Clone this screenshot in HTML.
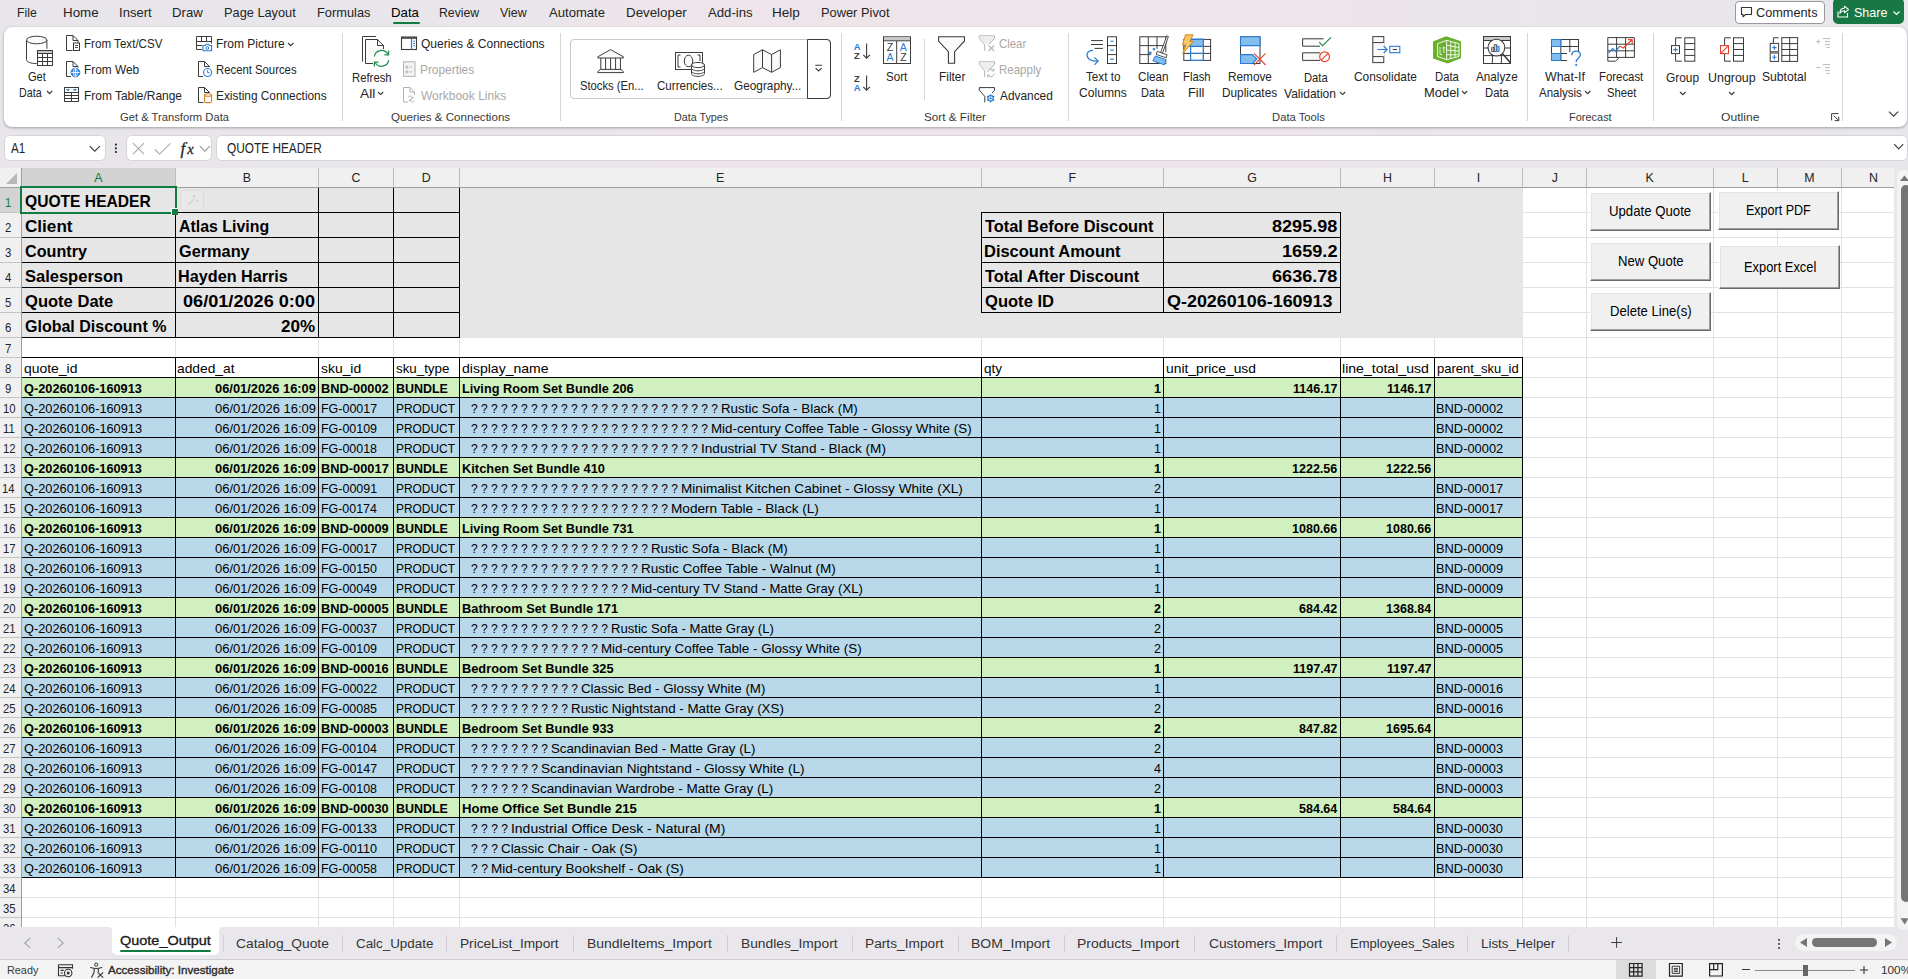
<!DOCTYPE html>
<html lang="en"><head><meta charset="utf-8"><title>Quote_Output - Excel</title>
<style>
html,body{margin:0;padding:0}
body{width:1908px;height:979px;overflow:hidden;position:relative;background:#e8e6eb;font-family:"Liberation Sans",Arial,sans-serif;color:#242424}
#app{position:absolute;left:0;top:0;width:1908px;height:979px;overflow:hidden}
#app div,#app svg,#app span.t{position:absolute}
span.t{white-space:pre;transform-origin:0 0;display:block}
span.sb{-webkit-text-stroke:0.35px currentColor}
</style></head>
<body><div id="app">
<div style="left:0px;top:0px;width:1908px;height:168px;background:linear-gradient(90deg,#e8e6eb 0%,#e9e6eb 22%,#eee5ea 40%,#eee5ea 62%,#eae6eb 80%,#e8e7ec 100%)"></div>
<span class="t" style="left:17.28px;top:4.85px;font-size:12.6px;font-weight:400;color:#242424;line-height:16px;transform:scaleX(0.9713);">File</span>
<span class="t" style="left:63.19px;top:4.85px;font-size:12.6px;font-weight:400;color:#242424;line-height:16px;transform:scaleX(1.0596);">Home</span>
<span class="t" style="left:119.11px;top:4.85px;font-size:12.6px;font-weight:400;color:#242424;line-height:16px;transform:scaleX(1.0362);">Insert</span>
<span class="t" style="left:172.21px;top:4.85px;font-size:12.6px;font-weight:400;color:#242424;line-height:16px;transform:scaleX(1.0442);">Draw</span>
<span class="t" style="left:224.24px;top:4.85px;font-size:12.6px;font-weight:400;color:#242424;line-height:16px;transform:scaleX(1.0146);">Page Layout</span>
<span class="t" style="left:317.23px;top:4.85px;font-size:12.6px;font-weight:400;color:#242424;line-height:16px;transform:scaleX(1.0179);">Formulas</span>
<span class="t" style="left:439.28px;top:4.85px;font-size:12.6px;font-weight:400;color:#242424;line-height:16px;transform:scaleX(0.9716);">Review</span>
<span class="t" style="left:500.25px;top:4.85px;font-size:12.6px;font-weight:400;color:#242424;line-height:16px;transform:scaleX(0.9842);">View</span>
<span class="t" style="left:549.00px;top:4.85px;font-size:12.6px;font-weight:400;color:#242424;line-height:16px;transform:scaleX(1.0394);">Automate</span>
<span class="t" style="left:625.94px;top:4.85px;font-size:12.6px;font-weight:400;color:#242424;line-height:16px;transform:scaleX(1.0585);">Developer</span>
<span class="t" style="left:708.25px;top:4.85px;font-size:12.6px;font-weight:400;color:#242424;line-height:16px;transform:scaleX(1.0460);">Add-ins</span>
<span class="t" style="left:772.17px;top:4.85px;font-size:12.6px;font-weight:400;color:#242424;line-height:16px;transform:scaleX(1.0759);">Help</span>
<span class="t" style="left:821.48px;top:4.85px;font-size:12.6px;font-weight:400;color:#242424;line-height:16px;transform:scaleX(1.0196);">Power Pivot</span>
<span class="t" style="left:391.45px;top:4.85px;font-size:12.6px;font-weight:400;color:#000;line-height:16px;transform:scaleX(1.0505);">Data</span>
<div style="left:392.5px;top:21.6px;width:27.5px;height:2.4px;background:#107c41;border-radius:1.2px"></div>
<div style="left:1735px;top:0.5px;width:90px;height:23.5px;background:#fff;border:1px solid #9a989c;border-radius:4px;box-sizing:border-box"></div>
<svg style="left:1740px;top:6px;" width="13" height="12" viewBox="0 0 13 12" fill="none"><path d="M1.5 1.5h10v7h-6l-2.5 2.3v-2.3h-1.5z" stroke="#333" stroke-width="1.1" stroke-linejoin="round"/></svg>
<span class="t" style="left:1756.14px;top:4.85px;font-size:12.6px;font-weight:400;color:#242424;line-height:16px;transform:scaleX(1.0102);">Comments</span>
<div style="left:1833px;top:-2px;width:71.3px;height:26px;background:#187844;border-radius:5px"></div>
<svg style="left:1836px;top:4px;" width="15" height="15" viewBox="0 0 15 15" fill="none"><path d="M2 7.5v5.5h9.5v-4" stroke="#fff" stroke-width="1.1"/><path d="M8.5 2.2l4 3.3-4 3.3v-2.1c-2.6 0-3.8 1-4.6 2.6 0-3 1.6-5 4.6-5.2z" stroke="#fff" stroke-width="1.05" stroke-linejoin="round"/></svg>
<span class="t" style="left:1853.50px;top:4.85px;font-size:12.6px;font-weight:400;color:#fff;line-height:16px;transform:scaleX(0.9969);">Share</span>
<svg style="left:1892px;top:10px;" width="9" height="6" viewBox="0 0 9 6" fill="none"><path d="M1.5 1.5l3 3 3-3" stroke="#fff" stroke-width="1.2"/></svg>
<div style="left:5px;top:135.6px;width:100.4px;height:24.7px;background:#fff;border-radius:4.5px;box-shadow:0 0 0 0.8px #d2d0d5"></div>
<span class="t" style="left:11.25px;top:138.60px;font-size:14.2px;font-weight:400;color:#242424;line-height:18px;transform:scaleX(0.8203);">A1</span>
<svg style="left:88px;top:144px;" width="14" height="10" viewBox="0 0 14 10" fill="none"><path d="M1.8 2.2l5 5 5-5" stroke="#3b3b3b" stroke-width="1.2"/></svg>
<svg style="left:114px;top:143px;" width="4" height="11" viewBox="0 0 4 11" fill="none"><circle cx="1.9" cy="1.6" r="1.1" fill="#222"/><circle cx="1.9" cy="5.3" r="1.1" fill="#222"/><circle cx="1.9" cy="9" r="1.1" fill="#222"/></svg>
<div style="left:127px;top:135.6px;width:84.2px;height:24.7px;background:#fff;border-radius:4.5px;box-shadow:0 0 0 0.8px #d2d0d5"></div>
<svg style="left:131px;top:141px;" width="16" height="15" viewBox="0 0 16 15" fill="none"><path d="M2 2.2l11 11M13 2.2l-11 11" stroke="#a9a9a9" stroke-width="1.1"/></svg>
<svg style="left:153px;top:141px;" width="20" height="15" viewBox="0 0 20 15" fill="none"><path d="M2 8.5l4.6 4.6L17.5 2.4" stroke="#a9a9a9" stroke-width="1.1"/></svg>
<span class="t sb" style="left:180.50px;top:137.60px;font-size:17px;font-weight:400;color:#2a2a2a;line-height:22px;font-family:'Liberation Serif','Times New Roman',serif;font-style:italic;">f</span>
<span class="t sb" style="left:187.20px;top:139.60px;font-size:14.5px;font-weight:400;color:#2a2a2a;line-height:19px;font-family:'Liberation Serif','Times New Roman',serif;font-style:italic;">x</span>
<svg style="left:198px;top:144px;" width="14" height="10" viewBox="0 0 14 10" fill="none"><path d="M1.8 2.2l5 5 5-5" stroke="#9a9a9a" stroke-width="1.1"/></svg>
<div style="left:217px;top:135.6px;width:1689.6px;height:24.7px;background:#fff;border-radius:4.5px;box-shadow:0 0 0 0.8px #d2d0d5"></div>
<span class="t" style="left:226.80px;top:138.60px;font-size:14.2px;font-weight:400;color:#242424;line-height:18px;transform:scaleX(0.8347);">QUOTE HEADER</span>
<svg style="left:1892px;top:142px;" width="14" height="10" viewBox="0 0 14 10" fill="none"><path d="M2.2 2.2l4.5 4.6 4.5-4.6" stroke="#3b3b3b" stroke-width="1.2"/></svg>
<div style="left:4px;top:27px;width:1903.3px;height:99.5px;background:#fff;border-radius:8px;box-shadow:0 1px 3px rgba(0,0,0,.3),0 0 1px rgba(0,0,0,.15)"></div>
<div style="left:342.0px;top:32.5px;width:1px;height:88.5px;background:#d6d6d6"></div>
<div style="left:560.25px;top:32.5px;width:1px;height:88.5px;background:#d6d6d6"></div>
<div style="left:841.0px;top:32.5px;width:1px;height:88.5px;background:#d6d6d6"></div>
<div style="left:1068.0px;top:32.5px;width:1px;height:88.5px;background:#d6d6d6"></div>
<div style="left:1526.75px;top:32.5px;width:1px;height:88.5px;background:#d6d6d6"></div>
<div style="left:1653.0px;top:32.5px;width:1px;height:88.5px;background:#d6d6d6"></div>
<div style="left:1841.75px;top:32.5px;width:1px;height:88.5px;background:#d6d6d6"></div>
<div style="left:924px;top:38.75px;width:1px;height:61px;background:#d6d6d6"></div>
<span class="t" style="left:27.70px;top:69.00px;font-size:12.2px;font-weight:400;color:#242424;line-height:16px;transform:scaleX(0.9095);">Get</span>
<span class="t" style="left:18.62px;top:84.90px;font-size:12.2px;font-weight:400;color:#242424;line-height:16px;transform:scaleX(0.8783);">Data</span>
<svg style="left:46.2px;top:90.0px;" width="7.199999999999996" height="4.599999999999998" viewBox="0 0 7.199999999999996 4.599999999999998" fill="none"><path d="M1 1l2.60 2.60 2.60 -2.60" stroke="#3b3b3b" stroke-width="1.15"/></svg>
<span class="t" style="left:83.55px;top:35.50px;font-size:12.2px;font-weight:400;color:#242424;line-height:16px;transform:scaleX(0.9525);">From Text/CSV</span>
<span class="t" style="left:83.53px;top:61.75px;font-size:12.2px;font-weight:400;color:#242424;line-height:16px;transform:scaleX(0.9740);">From Web</span>
<span class="t" style="left:83.52px;top:87.50px;font-size:12.2px;font-weight:400;color:#242424;line-height:16px;transform:scaleX(0.9791);">From Table/Range</span>
<span class="t" style="left:215.52px;top:35.50px;font-size:12.2px;font-weight:400;color:#242424;line-height:16px;transform:scaleX(0.9849);">From Picture</span>
<svg style="left:286.6px;top:42.050000000000004px;" width="7.399999999999977" height="4.699999999999989" viewBox="0 0 7.399999999999977 4.699999999999989" fill="none"><path d="M1 1l2.70 2.70 2.70 -2.70" stroke="#3b3b3b" stroke-width="1.15"/></svg>
<span class="t" style="left:215.57px;top:61.75px;font-size:12.2px;font-weight:400;color:#242424;line-height:16px;transform:scaleX(0.9289);">Recent Sources</span>
<span class="t" style="left:215.53px;top:87.50px;font-size:12.2px;font-weight:400;color:#242424;line-height:16px;transform:scaleX(0.9719);">Existing Connections</span>
<span class="t" style="left:120.25px;top:109.75px;font-size:11.3px;font-weight:400;color:#3a3a3a;line-height:15px;transform:scaleX(0.9919);">Get &amp; Transform Data</span>
<span class="t" style="left:352.32px;top:70.00px;font-size:12.2px;font-weight:400;color:#242424;line-height:16px;transform:scaleX(0.9290);">Refresh</span>
<span class="t" style="left:360.00px;top:85.50px;font-size:12.2px;font-weight:400;color:#242424;line-height:16px;transform:scaleX(1.1228);">All</span>
<svg style="left:377px;top:90.7px;" width="7.199999999999989" height="4.599999999999994" viewBox="0 0 7.199999999999989 4.599999999999994" fill="none"><path d="M1 1l2.60 2.60 2.60 -2.60" stroke="#3b3b3b" stroke-width="1.15"/></svg>
<span class="t" style="left:420.76px;top:35.50px;font-size:12.2px;font-weight:400;color:#242424;line-height:16px;transform:scaleX(0.9865);">Queries &amp; Connections</span>
<span class="t" style="left:420.28px;top:61.75px;font-size:12.2px;font-weight:400;color:#a8a8a8;line-height:16px;transform:scaleX(0.9742);">Properties</span>
<span class="t" style="left:421.25px;top:87.50px;font-size:12.2px;font-weight:400;color:#a8a8a8;line-height:16px;transform:scaleX(0.9845);">Workbook Links</span>
<span class="t" style="left:391.49px;top:109.75px;font-size:11.3px;font-weight:400;color:#3a3a3a;line-height:15px;transform:scaleX(1.0254);">Queries &amp; Connections</span>
<div style="left:570.25px;top:39.25px;width:260.5px;height:59.5px;border:1px solid #c8c8c8;border-radius:4px;box-sizing:border-box"></div>
<div style="left:807px;top:39.25px;width:23.75px;height:59.5px;border:1px solid #3b3b3b;border-radius:0 4px 4px 0;box-sizing:border-box"></div>
<span class="t" style="left:579.79px;top:78.00px;font-size:12.2px;font-weight:400;color:#242424;line-height:16px;transform:scaleX(0.9222);">Stocks (En...</span>
<span class="t" style="left:656.93px;top:78.00px;font-size:12.2px;font-weight:400;color:#242424;line-height:16px;transform:scaleX(0.9495);">Currencies...</span>
<span class="t" style="left:733.92px;top:78.00px;font-size:12.2px;font-weight:400;color:#242424;line-height:16px;transform:scaleX(0.9687);">Geography...</span>
<span class="t" style="left:673.64px;top:109.75px;font-size:11.3px;font-weight:400;color:#3a3a3a;line-height:15px;transform:scaleX(0.9517);">Data Types</span>
<span class="t" style="left:885.77px;top:69.00px;font-size:12.2px;font-weight:400;color:#242424;line-height:16px;transform:scaleX(0.9532);">Sort</span>
<span class="t" style="left:938.53px;top:69.00px;font-size:12.2px;font-weight:400;color:#242424;line-height:16px;transform:scaleX(0.9737);">Filter</span>
<span class="t" style="left:998.94px;top:35.50px;font-size:12.2px;font-weight:400;color:#a8a8a8;line-height:16px;transform:scaleX(0.9343);">Clear</span>
<span class="t" style="left:998.56px;top:61.75px;font-size:12.2px;font-weight:400;color:#a8a8a8;line-height:16px;transform:scaleX(0.9435);">Reapply</span>
<span class="t" style="left:999.50px;top:87.50px;font-size:12.2px;font-weight:400;color:#242424;line-height:16px;transform:scaleX(0.9732);">Advanced</span>
<span class="t" style="left:923.98px;top:109.75px;font-size:11.3px;font-weight:400;color:#3a3a3a;line-height:15px;transform:scaleX(1.0385);">Sort &amp; Filter</span>
<span class="t" style="left:1086.31px;top:69.00px;font-size:12.2px;font-weight:400;color:#242424;line-height:16px;transform:scaleX(0.9582);">Text to</span>
<span class="t" style="left:1079.15px;top:84.90px;font-size:12.2px;font-weight:400;color:#242424;line-height:16px;transform:scaleX(0.9927);">Columns</span>
<span class="t" style="left:1137.92px;top:69.00px;font-size:12.2px;font-weight:400;color:#242424;line-height:16px;transform:scaleX(0.9603);">Clean</span>
<span class="t" style="left:1140.59px;top:84.90px;font-size:12.2px;font-weight:400;color:#242424;line-height:16px;transform:scaleX(0.9085);">Data</span>
<span class="t" style="left:1182.57px;top:69.00px;font-size:12.2px;font-weight:400;color:#242424;line-height:16px;transform:scaleX(0.9277);">Flash</span>
<span class="t" style="left:1187.95px;top:84.90px;font-size:12.2px;font-weight:400;color:#242424;line-height:16px;transform:scaleX(1.0532);">Fill</span>
<span class="t" style="left:1227.53px;top:69.00px;font-size:12.2px;font-weight:400;color:#242424;line-height:16px;transform:scaleX(0.9680);">Remove</span>
<span class="t" style="left:1221.78px;top:84.90px;font-size:12.2px;font-weight:400;color:#242424;line-height:16px;transform:scaleX(0.9684);">Duplicates</span>
<span class="t" style="left:1303.58px;top:70.00px;font-size:12.2px;font-weight:400;color:#242424;line-height:16px;transform:scaleX(0.9186);">Data</span>
<span class="t" style="left:1284.00px;top:85.50px;font-size:12.2px;font-weight:400;color:#242424;line-height:16px;transform:scaleX(0.9886);">Validation</span>
<svg style="left:1339.2px;top:90.69999999999999px;" width="7.2000000000000455" height="4.600000000000023" viewBox="0 0 7.2000000000000455 4.600000000000023" fill="none"><path d="M1 1l2.60 2.60 2.60 -2.60" stroke="#3b3b3b" stroke-width="1.15"/></svg>
<span class="t" style="left:1354.16px;top:69.00px;font-size:12.2px;font-weight:400;color:#242424;line-height:16px;transform:scaleX(0.9757);">Consolidate</span>
<span class="t" style="left:1434.57px;top:69.00px;font-size:12.2px;font-weight:400;color:#242424;line-height:16px;transform:scaleX(0.9287);">Data</span>
<span class="t" style="left:1423.54px;top:84.90px;font-size:12.2px;font-weight:400;color:#242424;line-height:16px;transform:scaleX(1.0608);">Model</span>
<svg style="left:1461.2px;top:90.29999999999998px;" width="7.2000000000000455" height="4.600000000000023" viewBox="0 0 7.2000000000000455 4.600000000000023" fill="none"><path d="M1 1l2.60 2.60 2.60 -2.60" stroke="#3b3b3b" stroke-width="1.15"/></svg>
<span class="t" style="left:1476.00px;top:69.00px;font-size:12.2px;font-weight:400;color:#242424;line-height:16px;transform:scaleX(0.9621);">Analyze</span>
<span class="t" style="left:1484.57px;top:84.90px;font-size:12.2px;font-weight:400;color:#242424;line-height:16px;transform:scaleX(0.9287);">Data</span>
<span class="t" style="left:1271.85px;top:109.75px;font-size:11.3px;font-weight:400;color:#3a3a3a;line-height:15px;transform:scaleX(0.9967);">Data Tools</span>
<span class="t" style="left:1544.75px;top:69.00px;font-size:12.2px;font-weight:400;color:#242424;line-height:16px;transform:scaleX(1.0154);">What-If</span>
<span class="t" style="left:1538.50px;top:84.90px;font-size:12.2px;font-weight:400;color:#242424;line-height:16px;transform:scaleX(0.9446);">Analysis</span>
<svg style="left:1583.9px;top:90.25000000000003px;" width="7.399999999999864" height="4.699999999999932" viewBox="0 0 7.399999999999864 4.699999999999932" fill="none"><path d="M1 1l2.70 2.70 2.70 -2.70" stroke="#3b3b3b" stroke-width="1.15"/></svg>
<span class="t" style="left:1598.82px;top:69.00px;font-size:12.2px;font-weight:400;color:#242424;line-height:16px;transform:scaleX(0.9335);">Forecast</span>
<span class="t" style="left:1606.79px;top:84.90px;font-size:12.2px;font-weight:400;color:#242424;line-height:16px;transform:scaleX(0.9194);">Sheet</span>
<span class="t" style="left:1568.88px;top:109.75px;font-size:11.3px;font-weight:400;color:#3a3a3a;line-height:15px;transform:scaleX(0.9706);">Forecast</span>
<span class="t" style="left:1665.91px;top:70.00px;font-size:12.2px;font-weight:400;color:#242424;line-height:16px;transform:scaleX(0.9759);">Group</span>
<svg style="left:1678.8px;top:90.925px;" width="7.5" height="4.75" viewBox="0 0 7.5 4.75" fill="none"><path d="M1 1l2.75 2.75 2.75 -2.75" stroke="#3b3b3b" stroke-width="1.15"/></svg>
<span class="t" style="left:1707.58px;top:70.00px;font-size:12.2px;font-weight:400;color:#242424;line-height:16px;transform:scaleX(1.0192);">Ungroup</span>
<svg style="left:1727.9px;top:90.95000000000003px;" width="7.399999999999864" height="4.699999999999932" viewBox="0 0 7.399999999999864 4.699999999999932" fill="none"><path d="M1 1l2.70 2.70 2.70 -2.70" stroke="#3b3b3b" stroke-width="1.15"/></svg>
<span class="t" style="left:1761.75px;top:69.00px;font-size:12.2px;font-weight:400;color:#242424;line-height:16px;transform:scaleX(0.9960);">Subtotal</span>
<span class="t" style="left:1721.21px;top:109.75px;font-size:11.3px;font-weight:400;color:#3a3a3a;line-height:15px;transform:scaleX(1.0772);">Outline</span>
<svg style="left:0;top:0" width="1908" height="130" viewBox="0 0 1908 130" fill="none" stroke-linecap="butt"><path d="M26.5 40V59.6c0 2.2 4 4 10.2 4M46.9 40V48.8" stroke="#3b3b3b" fill="none" stroke-width="1" /><ellipse cx="36.7" cy="40" rx="10.2" ry="3.8" stroke="#3b3b3b" fill="#fafafa" stroke-width="1"/><rect x="37.5" y="50.5" width="15" height="15" stroke="#3b3b3b" fill="#fff" stroke-width="1" rx="0"/><rect x="38" y="51" width="14" height="2.3" stroke="none" fill="#c8c8c8" stroke-width="1" rx="0"/><path d="M37.5 53.5h15M37.5 57.5h15M37.5 61.5h15M42.5 53.5v12M47.5 53.5v12" stroke="#3b3b3b" fill="none" stroke-width="1" /><path d="M72.5 50.5H66.5V35.5H73.0L78.0 40.5V43.0M73.0 35.5V40.5H78.0" stroke="#3b3b3b" fill="none" stroke-width="1" /><rect x="73.5" y="43" width="6" height="7.5" stroke="#3b3b3b" fill="#fff" stroke-width="1" rx="0"/><path d="M75 45.5h3M75 47.5h3" stroke="#3b3b3b" fill="none" stroke-width="0.9" /><path d="M71.0 76.5H66.5V61.5H73.0L78.0 66.5V67.5M73.0 61.5V66.5H78.0" stroke="#3b3b3b" fill="none" stroke-width="1" /><circle cx="75.4" cy="72.5" r="4.4" stroke="#2b7cd3" fill="#2b7cd3" stroke-width="1"/><path d="M71.3 72.5h8.2M75.4 68.4v8.2" stroke="#fff" fill="none" stroke-width="0.9" /><ellipse cx="75.4" cy="72.5" rx="2" ry="4.1" stroke="#fff" fill="none" stroke-width="0.8"/><rect x="64.5" y="87.5" width="14" height="14" stroke="#3b3b3b" fill="#fff" stroke-width="1" rx="0"/><path d="M64.5 92.5h14M64.5 95.5h14M64.5 98.5h14M71.5 92.5v9" stroke="#3b3b3b" fill="none" stroke-width="1" /><path d="M66.3 89.3l1.6 1.7 1.6-1.7zM73.3 89.3l1.6 1.7 1.6-1.7z" stroke="#2b7cd3" fill="#2b7cd3" stroke-width="0.6" /><path d="M202 49.5H196.5V36.5h15V43.5M196.5 41.5h15M196.5 45.5h5.5M201.5 36.5v5M206.5 36.5v5" stroke="#3b3b3b" fill="none" stroke-width="1" /><path d="M203 45.5h2.2l.8-1.2h2.6l.8 1.2h2.2v5.2H203z" stroke="#2b7cd3" fill="#fff" stroke-width="1.1" /><circle cx="207.3" cy="48" r="1.4" stroke="#2b7cd3" fill="none" stroke-width="1"/><path d="M203.0 76.5H198.5V61.5H204.5L209.5 66.5V67.0M204.5 61.5V66.5H209.5" stroke="#3b3b3b" fill="none" stroke-width="1" /><circle cx="207.6" cy="72.5" r="4" stroke="#2b7cd3" fill="#fff" stroke-width="1.1"/><path d="M207.6 70.2v2.5h2" stroke="#2b7cd3" fill="none" stroke-width="1" /><path d="M203.5 102.5H198.5V87.5H204.5L209.5 92.5V93.0M204.5 87.5V92.5H209.5" stroke="#3b3b3b" fill="none" stroke-width="1" /><path d="M204.6 95v6.4c0 .7 1.5 1.2 3.5 1.2s3.5-.5 3.5-1.2V95" stroke="#d4842a" fill="#fff" stroke-width="1.1" /><ellipse cx="208.1" cy="95" rx="3.5" ry="1.3" stroke="#d4842a" fill="#fff" stroke-width="1.1"/><path d="M362.5 61.5V36.5H376" stroke="#3b3b3b" fill="none" stroke-width="1" /><path d="M373 63.5H365.5V39.5H377.5L383.5 45.5V49" stroke="#3b3b3b" fill="#fafafa" stroke-width="1" /><path d="M377.5 39.5V45.5H383.5" stroke="#3b3b3b" fill="none" stroke-width="1" /><path d="M374.3 56.5a7.3 7.3 0 0 1 13.6-2.2M388.7 60.2a7.3 7.3 0 0 1-13.6 2.3" stroke="#1e8e4e" fill="none" stroke-width="1.2" /><path d="M388.6 50.6v4.2h-4.2M374.4 66.4v-4.2h4.2" stroke="#1e8e4e" fill="none" stroke-width="1.2" /><rect x="401.5" y="37" width="15" height="12.5" stroke="#3b3b3b" fill="#fff" stroke-width="1.1" rx="0"/><path d="M401.5 38h15" stroke="#3b3b3b" fill="none" stroke-width="1.6" /><path d="M411.5 39v10.5" stroke="#2b7cd3" fill="none" stroke-width="1.2" /><path d="M413.2 41.2h1.8M413.2 43.5h1.8M413.2 45.8h1.8" stroke="#2b7cd3" fill="none" stroke-width="1" /><rect x="403.5" y="61.8" width="11.5" height="14.6" stroke="#b3b3b3" fill="#f3f3f3" stroke-width="1" rx="0"/><path d="M406 66.2h1.8v1.8H406zM406 71h1.8v1.8H406zM409.5 67.1h2.5M409.5 71.9h2.5" stroke="#b3b3b3" fill="none" stroke-width="0.9" /><path d="M408 102H403.5V87.5H410L414.5 92V95M410 87.5V92H414.5" stroke="#b3b3b3" fill="none" stroke-width="1" /><path d="M408.2 97.3c1-1.6 3.4-1.6 4 0 .6 1.6-1.8 3.4-3.4 3.4M414.6 100.8c-1 1.6-3.4 1.6-4 0-.6-1.6 1.8-3.4 3.4-3.4" stroke="#b3b3b3" fill="none" stroke-width="1" /><path d="M597.8 56.8L610.5 49.6 623.4 56.8V58H597.8Z" stroke="#3b3b3b" fill="#fafafa" stroke-width="1" /><path d="M600.8 58V69.4M605.6 58V69.4M610.6 58V69.4M615.6 58V69.4M620.4 58V69.4" stroke="#3b3b3b" fill="none" stroke-width="1" /><path d="M600.3 69.4H621L623.4 71.6V72.6H597.8V71.6Z" stroke="#3b3b3b" fill="#fafafa" stroke-width="1" /><rect x="675.5" y="52.5" width="27" height="17" stroke="#3b3b3b" fill="#fff" stroke-width="1" rx="0"/><path d="M680.5 55H678v12h2.5M697.5 55H700v6" stroke="#3b3b3b" fill="none" stroke-width="1" /><ellipse cx="688.5" cy="61" rx="4.2" ry="5.8" stroke="#3b3b3b" fill="#fafafa" stroke-width="1"/><path d="M691.5 65v8.6c0 1.6 2.9 2.8 6.5 2.8s6.5-1.2 6.5-2.8V65" stroke="#3b3b3b" fill="#fff" stroke-width="1" /><ellipse cx="698" cy="65" rx="6.5" ry="2.6" stroke="#3b3b3b" fill="#fff" stroke-width="1"/><path d="M691.5 68c0 1.6 2.9 2.8 6.5 2.8s6.5-1.2 6.5-2.8M691.5 71c0 1.6 2.9 2.8 6.5 2.8s6.5-1.2 6.5-2.8" stroke="#3b3b3b" fill="none" stroke-width="1" /><path d="M753.7 54.5L762.5 49.8 771.6 54.5 780.4 49.8V67.6L771.6 72.3 762.5 67.6 753.7 72.3ZM762.5 49.8V67.6M771.6 54.5V72.3" stroke="#3b3b3b" fill="#fafafa" stroke-width="1" /><path d="M815.3 65.2h6.6M815.6 68.2l3 2.8 3-2.8" stroke="#3b3b3b" fill="none" stroke-width="1.1" /><text x="853.8" y="49.7" font-family="Liberation Sans,Arial,sans-serif" font-size="9.4" font-weight="700" fill="#2b7cd3">A</text><text x="854.1" y="58.6" font-family="Liberation Sans,Arial,sans-serif" font-size="9.4" font-weight="700" fill="#3b3b3b">Z</text><path d="M866.6 43.5V58M863.3 54.8l3.3 3.3 3.3-3.3" stroke="#3b3b3b" fill="none" stroke-width="1.1" /><text x="854.1" y="81.6" font-family="Liberation Sans,Arial,sans-serif" font-size="9.4" font-weight="700" fill="#3b3b3b">Z</text><text x="853.8" y="90.8" font-family="Liberation Sans,Arial,sans-serif" font-size="9.4" font-weight="700" fill="#2b7cd3">A</text><path d="M866.6 75.5V90M863.3 86.8l3.3 3.3 3.3-3.3" stroke="#3b3b3b" fill="none" stroke-width="1.1" /><rect x="883.5" y="36.8" width="27" height="26.7" stroke="#3b3b3b" fill="#fff" stroke-width="1" rx="0"/><rect x="884" y="37.3" width="26" height="3" stroke="none" fill="#c8c8c8" stroke-width="1" rx="0"/><path d="M883.5 40.8h27M896.7 40.8v22.7" stroke="#3b3b3b" fill="none" stroke-width="1" /><text x="886.7" y="51" font-family="Liberation Sans,Arial,sans-serif" font-size="10.6" fill="#3b3b3b">Z</text><text x="886.4" y="61" font-family="Liberation Sans,Arial,sans-serif" font-size="10.6" fill="#2b7cd3">A</text><text x="899.8" y="51" font-family="Liberation Sans,Arial,sans-serif" font-size="10.6" fill="#2b7cd3">A</text><text x="900.2" y="61" font-family="Liberation Sans,Arial,sans-serif" font-size="10.6" fill="#3b3b3b">Z</text><path d="M938.6 36.8H964.5V41L954.6 51.6V63.3H948.4V51.6L938.6 41Z" stroke="#3b3b3b" fill="#fafafa" stroke-width="1.1" /><path d="M979.3 35.8H994.5V38.5L988.5 44.6M984.6 50.8V44.6L979.3 38.5V35.8" stroke="#b3b3b3" fill="none" stroke-width="1" /><path d="M979.8 36.3H994V38.3L988 44.3H985L979.8 38.3Z" stroke="none" fill="#ededed" stroke-width="1" /><path d="M988.6 45.4l5.6 5.6M994.2 45.4l-5.6 5.6" stroke="#b3b3b3" fill="none" stroke-width="1.1" /><path d="M979.3 61.8H994.5V64.5L990 69M984.6 76.8V70.6L979.3 64.5V61.8" stroke="#b3b3b3" fill="none" stroke-width="1" /><path d="M979.8 62.3H994V64.3L988 70.3H985L979.8 64.3Z" stroke="none" fill="#ededed" stroke-width="1" /><path d="M987.3 72.2a3.6 3.6 0 0 1 6.4-1.6M994.3 73.6a3.6 3.6 0 0 1-6.4 1.7M994 68.6v2.3h-2.3M987.5 77.4v-2.3h2.3" stroke="#b3b3b3" fill="none" stroke-width="1" /><path d="M984.8 102.4V96.4L979.3 90.3V87.6H994.5V90.3L992 93" stroke="#3b3b3b" fill="none" stroke-width="1" /><circle cx="990.6" cy="98.3" r="2.7" stroke="#2b7cd3" fill="#fff" stroke-width="1.2"/><path d="M990.6 94.2v1.4M990.6 101v1.4M987 96.3l1.2.7M993 99.6l1.2.7M987 100.3l1.2-.7M993 97l1.2-.7" stroke="#2b7cd3" fill="none" stroke-width="1.3" /><circle cx="990.6" cy="98.3" r="0.9" stroke="#2b7cd3" fill="#2b7cd3" stroke-width="0.5"/><path d="M1091 40.6h12M1091 44.5h12M1094.5 48.4h8.5" stroke="#3b3b3b" fill="none" stroke-width="1" /><path d="M1093 50.3c-5.5 0-7.3 4-5 7.6 1.7 2.6 5 3.3 9.5 3.2M1094.4 57.3l3.8 3.8-3.8 3.8" stroke="#2b7cd3" fill="none" stroke-width="1.2" /><rect x="1107.5" y="36.8" width="9" height="26.7" stroke="#3b3b3b" fill="#fff" stroke-width="1" rx="0"/><path d="M1107.5 45.6h9M1107.5 54.6h9" stroke="#3b3b3b" fill="none" stroke-width="1" /><path d="M1110.3 41.2h3.4M1110.3 50.1h3.4M1110.3 59.1h3.4" stroke="#2b7cd3" fill="none" stroke-width="1.1" /><rect x="1139.8" y="36.8" width="26" height="26.7" stroke="#3b3b3b" fill="#fff" stroke-width="1" rx="0"/><path d="M1139.8 45.6h26M1139.8 54.6h26M1148.3 36.8v26.7M1157 36.8v26.7" stroke="#3b3b3b" fill="none" stroke-width="1" /><path d="M1149 57l6-9 13 5-3 11z" stroke="none" fill="#fff" stroke-width="1" /><path d="M1166.8 35.8l1.6.8-6.2 17.6-1.9-.7z" stroke="#3b3b3b" fill="#fff" stroke-width="0.9" /><path d="M1156.2 54.4l9.8 3.4 1-3-9.7-3.4z" stroke="#3b3b3b" fill="#fff" stroke-width="0.9" /><path d="M1155.4 56l10.4 3.7-1.4 5.2-11.6-4.2z" stroke="#2b7cd3" fill="#83beec" stroke-width="1" /><path d="M1150.2 51.5l1.5 1.5-1.5 1.5-1.5-1.5zM1154 47.8l1.3 1.3-1.3 1.3-1.3-1.3z" stroke="#2b7cd3" fill="#2b7cd3" stroke-width="0.5" /><rect x="1183.8" y="39.4" width="26.8" height="21" stroke="#3b3b3b" fill="#fff" stroke-width="1" rx="0"/><path d="M1183.8 46.4h26.8M1183.8 53.4h26.8M1203.4 39.4v21" stroke="#3b3b3b" fill="none" stroke-width="1" /><path d="M1190.6 39.4H1203.4V60.4H1190.6ZM1190.6 46.4h12.8M1190.6 53.4h12.8" stroke="#2b7cd3" fill="none" stroke-width="1.2" /><path d="M1190.6 39.4H1203.4V46.4H1190.6Z" stroke="#2b7cd3" fill="#83beec" stroke-width="1.2" /><path d="M1185.5 34.8h7.6l-3.3 6.6h3.6l-10.6 12 3-8.6h-3.3z" stroke="#d08a1c" fill="#f5c86a" stroke-width="1" /><rect x="1240.5" y="36.8" width="19.5" height="26.7" stroke="#3b3b3b" fill="#fff" stroke-width="1" rx="0"/><path d="M1240.5 36.8H1260V45.6H1240.5Z" stroke="#2b7cd3" fill="#83beec" stroke-width="1.1" /><path d="M1240.5 54.6H1252.5L1256.8 59 1252.5 63.5H1240.5Z" stroke="#2b7cd3" fill="#83beec" stroke-width="1.1" /><path d="M1254 53.4l11.6 11.6M1265.6 53.4L1254 65" stroke="#e8452c" fill="none" stroke-width="1.1" /><path d="M1323.6 38.8H1302.6V46.2H1320" stroke="#3b3b3b" fill="#fafafa" stroke-width="1" /><path d="M1319.2 42.2l3.3 3.5 8.6-8.3" stroke="#1e8e4e" fill="none" stroke-width="1.2" /><path d="M1320 52.8H1302.6V60.4H1320" stroke="#3b3b3b" fill="#fafafa" stroke-width="1" /><circle cx="1324.6" cy="56.7" r="4.9" stroke="#e8452c" fill="#fff" stroke-width="1.2"/><path d="M1321.2 60.1l6.8-6.8" stroke="#e8452c" fill="none" stroke-width="1.2" /><rect x="1372.8" y="36.6" width="11" height="26" stroke="#3b3b3b" fill="#fafafa" stroke-width="1" rx="0"/><path d="M1372.8 42.6h11M1372.8 56.6h11" stroke="#3b3b3b" fill="none" stroke-width="1" /><path d="M1383.8 43V56.2" stroke="#fff" fill="none" stroke-width="1.6" /><path d="M1377.5 49.5h9.6M1383.6 46l3.6 3.5-3.6 3.5" stroke="#2b7cd3" fill="none" stroke-width="1.1" /><rect x="1389.8" y="46.3" width="10" height="6.4" stroke="#2b7cd3" fill="#fff" stroke-width="1.1" rx="0"/><path d="M1392.6 49.5h4.4" stroke="#3b3b3b" fill="none" stroke-width="1" /><path d="M1433 41.5L1446 36.2 1461 41.2V58.2L1447.5 63.6 1433 58.6Z" stroke="none" fill="#6aaf2e" stroke-width="1" /><path d="M1437.6 43.6L1446.6 40.4V59.6L1437.6 56.6Z" stroke="#fff" fill="none" stroke-width="0.9" /><path d="M1446.6 40.4L1459 43.6V56.4L1446.6 59.6M1446.6 45.2l12.4 2.4M1446.6 50l12.4 1.2M1446.6 54.8l12.4 0M1450.8 41.6v17M1455 42.6v15" stroke="#fff" fill="none" stroke-width="0.9" /><path d="M1440 47v7.5h2.2M1443.8 53v-6M1442.4 48.4l1.4-1.4 1.4 1.4" stroke="#fff" fill="none" stroke-width="0.8" /><rect x="1483.5" y="36.5" width="27" height="27" stroke="#3b3b3b" fill="#fff" stroke-width="1" rx="0"/><rect x="1484" y="37" width="26" height="3" stroke="none" fill="#c8c8c8" stroke-width="1" rx="0"/><path d="M1483.5 40.5h27M1483.5 48h27M1483.5 55.6h27M1492.4 40.5v23M1501.4 40.5v23" stroke="#3b3b3b" fill="none" stroke-width="1" /><circle cx="1496.4" cy="47.6" r="8.4" stroke="#3b3b3b" fill="#fff" stroke-width="1.1"/><path d="M1502.6 53.8l8 9.2" stroke="#3b3b3b" fill="none" stroke-width="1.6" /><path d="M1491.6 51.6v-4h2.4v4zM1494.2 51.6v-7h2.4v7z" stroke="#3b3b3b" fill="#d0d0d0" stroke-width="0.8" /><path d="M1496.8 51.6v-5.4h2.4v5.4z" stroke="#2b7cd3" fill="#83beec" stroke-width="0.8" /><rect x="1551.5" y="39.5" width="27" height="21" stroke="#3b3b3b" fill="#fff" stroke-width="1" rx="0"/><path d="M1551.5 46.5h27M1551.5 53.5h27M1560.8 39.5v21M1569.8 39.5v21" stroke="#3b3b3b" fill="none" stroke-width="1" /><path d="M1551.5 39.5h9.3v7h-9.3zM1551.5 53.5h9.3v7h-9.3z" stroke="#2b7cd3" fill="#83beec" stroke-width="1.1" /><path d="M1567 52h13v14h-13z" stroke="none" fill="#fff" stroke-width="1" /><path d="M1571.8 55.2c0-5.4 8.6-5.2 8.6-.4 0 3.2-4.2 3.2-4.2 7.2" stroke="#2b7cd3" fill="none" stroke-width="1.3" /><circle cx="1576.2" cy="64.9" r="0.9" stroke="#2b7cd3" fill="#2b7cd3" stroke-width="0.3"/><path d="M1615.6 61.2H1607.8V37.6H1634.4V57.4H1619.4ZM1607.8 57.4H1619.4M1607.8 44.2h26.6M1607.8 50.8h26.6M1616.6 37.6v19.8M1625.6 37.6v19.8" stroke="#3b3b3b" fill="#fff" stroke-width="1" /><path d="M1608.6 53.2l4-4.6 3 2.6 4.4-5" stroke="#2b7cd3" fill="none" stroke-width="1.2" /><path d="M1620 46.2l3.4 1.8 8.6-8.2M1628 39.6h4.2v4.2" stroke="#e8452c" fill="none" stroke-width="1.2" /><path d="M1681.8 37.8H1675.6V45M1675.6 54V61.2H1681.8" stroke="#3b3b3b" fill="none" stroke-width="1" /><rect x="1684.8" y="37.8" width="10" height="23.4" stroke="#3b3b3b" fill="#fff" stroke-width="1" rx="0"/><path d="M1684.8 43.6h10M1684.8 49.5h10M1684.8 55.4h10" stroke="#3b3b3b" fill="none" stroke-width="1" /><rect x="1671.5" y="45.6" width="8" height="8" stroke="#3b3b3b" fill="#fff" stroke-width="1" rx="0"/><path d="M1673.3 49.6h4.4M1675.5 47.4v4.4" stroke="#2b7cd3" fill="none" stroke-width="1.1" /><path d="M1730.8 37.8H1724.6V45M1724.6 54V61.2H1730.8" stroke="#3b3b3b" fill="none" stroke-width="1" /><rect x="1733.5" y="37.8" width="10" height="23.4" stroke="#3b3b3b" fill="#fff" stroke-width="1" rx="0"/><path d="M1733.5 43.6h10M1733.5 49.5h10M1733.5 55.4h10" stroke="#3b3b3b" fill="none" stroke-width="1" /><rect x="1720.5" y="45.6" width="8" height="8" stroke="#e8452c" fill="#fff" stroke-width="1.1" rx="0"/><path d="M1720.8 53.3l7.4-7.4" stroke="#e8452c" fill="none" stroke-width="1.1" /><path d="M1778.6 37.8H1773.4V43" stroke="#3b3b3b" fill="none" stroke-width="1" /><rect x="1781.8" y="37.6" width="15.8" height="23.8" stroke="#3b3b3b" fill="#fff" stroke-width="1" rx="0"/><path d="M1781.8 43.6h15.8M1781.8 49.5h15.8M1781.8 55.4h15.8M1789.7 37.6v23.8" stroke="#3b3b3b" fill="none" stroke-width="1" /><rect x="1770.2" y="43.4" width="8.4" height="8.4" stroke="#3b3b3b" fill="#fff" stroke-width="1" rx="0"/><rect x="1770.2" y="53" width="8.4" height="8.4" stroke="#3b3b3b" fill="#fff" stroke-width="1" rx="0"/><path d="M1772.2 47.6h4.4M1774.4 45.4v4.4M1772.2 57.2h4.4M1774.4 55v4.4" stroke="#2b7cd3" fill="none" stroke-width="1.1" /><path d="M1816.3 41.6h4M1818.3 39.6v4M1822.6 38.6h7.4M1825 41.6h5M1825 44.6h5M1826.6 47.4h3.4" stroke="#b3b3b3" fill="none" stroke-width="0.9" /><path d="M1816.3 67.6h4M1822.6 64.6h7.4M1825 67.6h5M1825 70.6h5M1826.6 73.4h3.4" stroke="#b3b3b3" fill="none" stroke-width="0.9" /><path d="M1838.6 113.6H1831.6V120.4M1833.8 115.8l4.8 4.6M1838.8 116.6v4h-4" stroke="#3b3b3b" fill="none" stroke-width="1" /><path d="M1889 111.6l4.6 4.6 4.6-4.6" stroke="#3b3b3b" fill="none" stroke-width="1.2" /></svg>
<div id="sheet" style="left:0;top:0;width:1894px;height:927px;overflow:hidden">
<div style="left:0px;top:168px;width:1894px;height:759px;background:#fff"></div>
<div style="left:175px;top:188px;width:1px;height:740px;background:#e1e1e1"></div>
<div style="left:318px;top:188px;width:1px;height:740px;background:#e1e1e1"></div>
<div style="left:393px;top:188px;width:1px;height:740px;background:#e1e1e1"></div>
<div style="left:459px;top:188px;width:1px;height:740px;background:#e1e1e1"></div>
<div style="left:981px;top:188px;width:1px;height:740px;background:#e1e1e1"></div>
<div style="left:1163px;top:188px;width:1px;height:740px;background:#e1e1e1"></div>
<div style="left:1340px;top:188px;width:1px;height:740px;background:#e1e1e1"></div>
<div style="left:1434px;top:188px;width:1px;height:740px;background:#e1e1e1"></div>
<div style="left:1522px;top:188px;width:1px;height:740px;background:#e1e1e1"></div>
<div style="left:1586px;top:188px;width:1px;height:740px;background:#e1e1e1"></div>
<div style="left:1713px;top:188px;width:1px;height:740px;background:#e1e1e1"></div>
<div style="left:1777px;top:188px;width:1px;height:740px;background:#e1e1e1"></div>
<div style="left:1841px;top:188px;width:1px;height:740px;background:#e1e1e1"></div>
<div style="left:1905px;top:188px;width:1px;height:740px;background:#e1e1e1"></div>
<div style="left:22px;top:212px;width:1872px;height:1px;background:#e1e1e1"></div>
<div style="left:22px;top:237px;width:1872px;height:1px;background:#e1e1e1"></div>
<div style="left:22px;top:262px;width:1872px;height:1px;background:#e1e1e1"></div>
<div style="left:22px;top:287px;width:1872px;height:1px;background:#e1e1e1"></div>
<div style="left:22px;top:312px;width:1872px;height:1px;background:#e1e1e1"></div>
<div style="left:22px;top:337px;width:1872px;height:1px;background:#e1e1e1"></div>
<div style="left:22px;top:357px;width:1872px;height:1px;background:#e1e1e1"></div>
<div style="left:22px;top:377px;width:1872px;height:1px;background:#e1e1e1"></div>
<div style="left:22px;top:397px;width:1872px;height:1px;background:#e1e1e1"></div>
<div style="left:22px;top:417px;width:1872px;height:1px;background:#e1e1e1"></div>
<div style="left:22px;top:437px;width:1872px;height:1px;background:#e1e1e1"></div>
<div style="left:22px;top:457px;width:1872px;height:1px;background:#e1e1e1"></div>
<div style="left:22px;top:477px;width:1872px;height:1px;background:#e1e1e1"></div>
<div style="left:22px;top:497px;width:1872px;height:1px;background:#e1e1e1"></div>
<div style="left:22px;top:517px;width:1872px;height:1px;background:#e1e1e1"></div>
<div style="left:22px;top:537px;width:1872px;height:1px;background:#e1e1e1"></div>
<div style="left:22px;top:557px;width:1872px;height:1px;background:#e1e1e1"></div>
<div style="left:22px;top:577px;width:1872px;height:1px;background:#e1e1e1"></div>
<div style="left:22px;top:597px;width:1872px;height:1px;background:#e1e1e1"></div>
<div style="left:22px;top:617px;width:1872px;height:1px;background:#e1e1e1"></div>
<div style="left:22px;top:637px;width:1872px;height:1px;background:#e1e1e1"></div>
<div style="left:22px;top:657px;width:1872px;height:1px;background:#e1e1e1"></div>
<div style="left:22px;top:677px;width:1872px;height:1px;background:#e1e1e1"></div>
<div style="left:22px;top:697px;width:1872px;height:1px;background:#e1e1e1"></div>
<div style="left:22px;top:717px;width:1872px;height:1px;background:#e1e1e1"></div>
<div style="left:22px;top:737px;width:1872px;height:1px;background:#e1e1e1"></div>
<div style="left:22px;top:757px;width:1872px;height:1px;background:#e1e1e1"></div>
<div style="left:22px;top:777px;width:1872px;height:1px;background:#e1e1e1"></div>
<div style="left:22px;top:797px;width:1872px;height:1px;background:#e1e1e1"></div>
<div style="left:22px;top:817px;width:1872px;height:1px;background:#e1e1e1"></div>
<div style="left:22px;top:837px;width:1872px;height:1px;background:#e1e1e1"></div>
<div style="left:22px;top:857px;width:1872px;height:1px;background:#e1e1e1"></div>
<div style="left:22px;top:877px;width:1872px;height:1px;background:#e1e1e1"></div>
<div style="left:22px;top:897px;width:1872px;height:1px;background:#e1e1e1"></div>
<div style="left:22px;top:917px;width:1872px;height:1px;background:#e1e1e1"></div>
<div style="left:22px;top:937px;width:1872px;height:1px;background:#e1e1e1"></div>
<div style="left:22px;top:188px;width:1501px;height:150px;background:#e7e6e6"></div>
<div style="left:22px;top:378px;width:1501px;height:20px;background:#d0f0c0"></div>
<div style="left:22px;top:398px;width:1501px;height:20px;background:#b9d8ea"></div>
<div style="left:22px;top:418px;width:1501px;height:20px;background:#b9d8ea"></div>
<div style="left:22px;top:438px;width:1501px;height:20px;background:#b9d8ea"></div>
<div style="left:22px;top:458px;width:1501px;height:20px;background:#d0f0c0"></div>
<div style="left:22px;top:478px;width:1501px;height:20px;background:#b9d8ea"></div>
<div style="left:22px;top:498px;width:1501px;height:20px;background:#b9d8ea"></div>
<div style="left:22px;top:518px;width:1501px;height:20px;background:#d0f0c0"></div>
<div style="left:22px;top:538px;width:1501px;height:20px;background:#b9d8ea"></div>
<div style="left:22px;top:558px;width:1501px;height:20px;background:#b9d8ea"></div>
<div style="left:22px;top:578px;width:1501px;height:20px;background:#b9d8ea"></div>
<div style="left:22px;top:598px;width:1501px;height:20px;background:#d0f0c0"></div>
<div style="left:22px;top:618px;width:1501px;height:20px;background:#b9d8ea"></div>
<div style="left:22px;top:638px;width:1501px;height:20px;background:#b9d8ea"></div>
<div style="left:22px;top:658px;width:1501px;height:20px;background:#d0f0c0"></div>
<div style="left:22px;top:678px;width:1501px;height:20px;background:#b9d8ea"></div>
<div style="left:22px;top:698px;width:1501px;height:20px;background:#b9d8ea"></div>
<div style="left:22px;top:718px;width:1501px;height:20px;background:#d0f0c0"></div>
<div style="left:22px;top:738px;width:1501px;height:20px;background:#b9d8ea"></div>
<div style="left:22px;top:758px;width:1501px;height:20px;background:#b9d8ea"></div>
<div style="left:22px;top:778px;width:1501px;height:20px;background:#b9d8ea"></div>
<div style="left:22px;top:798px;width:1501px;height:20px;background:#d0f0c0"></div>
<div style="left:22px;top:818px;width:1501px;height:20px;background:#b9d8ea"></div>
<div style="left:22px;top:838px;width:1501px;height:20px;background:#b9d8ea"></div>
<div style="left:22px;top:858px;width:1501px;height:20px;background:#b9d8ea"></div>
<div style="left:21px;top:187px;width:439px;height:1px;background:#000"></div>
<div style="left:21px;top:212px;width:439px;height:1px;background:#000"></div>
<div style="left:21px;top:237px;width:439px;height:1px;background:#000"></div>
<div style="left:21px;top:262px;width:439px;height:1px;background:#000"></div>
<div style="left:21px;top:287px;width:439px;height:1px;background:#000"></div>
<div style="left:21px;top:312px;width:439px;height:1px;background:#000"></div>
<div style="left:21px;top:337px;width:439px;height:1px;background:#000"></div>
<div style="left:21px;top:187px;width:1px;height:151px;background:#000"></div>
<div style="left:175px;top:187px;width:1px;height:151px;background:#000"></div>
<div style="left:318px;top:187px;width:1px;height:151px;background:#000"></div>
<div style="left:393px;top:187px;width:1px;height:151px;background:#000"></div>
<div style="left:459px;top:187px;width:1px;height:151px;background:#000"></div>
<div style="left:981px;top:212px;width:360px;height:1px;background:#000"></div>
<div style="left:981px;top:237px;width:360px;height:1px;background:#000"></div>
<div style="left:981px;top:262px;width:360px;height:1px;background:#000"></div>
<div style="left:981px;top:287px;width:360px;height:1px;background:#000"></div>
<div style="left:981px;top:312px;width:360px;height:1px;background:#000"></div>
<div style="left:981px;top:212px;width:1px;height:101px;background:#000"></div>
<div style="left:1163px;top:212px;width:1px;height:101px;background:#000"></div>
<div style="left:1340px;top:212px;width:1px;height:101px;background:#000"></div>
<div style="left:21px;top:357px;width:1502px;height:1px;background:#000"></div>
<div style="left:21px;top:377px;width:1502px;height:1px;background:#000"></div>
<div style="left:21px;top:397px;width:1502px;height:1px;background:#000"></div>
<div style="left:21px;top:417px;width:1502px;height:1px;background:#000"></div>
<div style="left:21px;top:437px;width:1502px;height:1px;background:#000"></div>
<div style="left:21px;top:457px;width:1502px;height:1px;background:#000"></div>
<div style="left:21px;top:477px;width:1502px;height:1px;background:#000"></div>
<div style="left:21px;top:497px;width:1502px;height:1px;background:#000"></div>
<div style="left:21px;top:517px;width:1502px;height:1px;background:#000"></div>
<div style="left:21px;top:537px;width:1502px;height:1px;background:#000"></div>
<div style="left:21px;top:557px;width:1502px;height:1px;background:#000"></div>
<div style="left:21px;top:577px;width:1502px;height:1px;background:#000"></div>
<div style="left:21px;top:597px;width:1502px;height:1px;background:#000"></div>
<div style="left:21px;top:617px;width:1502px;height:1px;background:#000"></div>
<div style="left:21px;top:637px;width:1502px;height:1px;background:#000"></div>
<div style="left:21px;top:657px;width:1502px;height:1px;background:#000"></div>
<div style="left:21px;top:677px;width:1502px;height:1px;background:#000"></div>
<div style="left:21px;top:697px;width:1502px;height:1px;background:#000"></div>
<div style="left:21px;top:717px;width:1502px;height:1px;background:#000"></div>
<div style="left:21px;top:737px;width:1502px;height:1px;background:#000"></div>
<div style="left:21px;top:757px;width:1502px;height:1px;background:#000"></div>
<div style="left:21px;top:777px;width:1502px;height:1px;background:#000"></div>
<div style="left:21px;top:797px;width:1502px;height:1px;background:#000"></div>
<div style="left:21px;top:817px;width:1502px;height:1px;background:#000"></div>
<div style="left:21px;top:837px;width:1502px;height:1px;background:#000"></div>
<div style="left:21px;top:857px;width:1502px;height:1px;background:#000"></div>
<div style="left:21px;top:877px;width:1502px;height:1px;background:#000"></div>
<div style="left:21px;top:357px;width:1px;height:521px;background:#000"></div>
<div style="left:175px;top:357px;width:1px;height:521px;background:#000"></div>
<div style="left:318px;top:357px;width:1px;height:521px;background:#000"></div>
<div style="left:393px;top:357px;width:1px;height:521px;background:#000"></div>
<div style="left:459px;top:357px;width:1px;height:521px;background:#000"></div>
<div style="left:981px;top:357px;width:1px;height:521px;background:#000"></div>
<div style="left:1163px;top:357px;width:1px;height:521px;background:#000"></div>
<div style="left:1340px;top:357px;width:1px;height:521px;background:#000"></div>
<div style="left:1434px;top:357px;width:1px;height:521px;background:#000"></div>
<div style="left:1522px;top:357px;width:1px;height:521px;background:#000"></div>
<span class="t" style="left:25.19px;top:190.80px;font-size:16.7px;font-weight:700;color:#000;line-height:22px;transform:scaleX(0.9358);">QUOTE HEADER</span>
<span class="t" style="left:25.13px;top:215.80px;font-size:16.7px;font-weight:700;color:#000;line-height:22px;transform:scaleX(1.0253);">Client</span>
<span class="t" style="left:178.87px;top:215.80px;font-size:16.7px;font-weight:700;color:#000;line-height:22px;transform:scaleX(0.9535);">Atlas Living</span>
<span class="t" style="left:25.17px;top:240.80px;font-size:16.7px;font-weight:700;color:#000;line-height:22px;transform:scaleX(0.9679);">Country</span>
<span class="t" style="left:178.66px;top:240.80px;font-size:16.7px;font-weight:700;color:#000;line-height:22px;transform:scaleX(0.9767);">Germany</span>
<span class="t" style="left:25.35px;top:265.80px;font-size:16.7px;font-weight:700;color:#000;line-height:22px;transform:scaleX(0.9888);">Salesperson</span>
<span class="t" style="left:178.18px;top:265.80px;font-size:16.7px;font-weight:700;color:#000;line-height:22px;transform:scaleX(0.9711);">Hayden Harris</span>
<span class="t" style="left:25.15px;top:290.80px;font-size:16.7px;font-weight:700;color:#000;line-height:22px;transform:scaleX(0.9923);">Quote Date</span>
<span class="t" style="left:183.10px;top:290.80px;font-size:16.7px;font-weight:700;color:#000;line-height:22px;transform:scaleX(1.0862);">06/01/2026 0:00</span>
<span class="t" style="left:25.17px;top:315.80px;font-size:16.7px;font-weight:700;color:#000;line-height:22px;transform:scaleX(0.9592);">Global Discount %</span>
<span class="t" style="left:280.74px;top:315.80px;font-size:16.7px;font-weight:700;color:#000;line-height:22px;transform:scaleX(1.0213);">20%</span>
<span class="t" style="left:985.40px;top:215.80px;font-size:16.7px;font-weight:700;color:#000;line-height:22px;transform:scaleX(0.9789);">Total Before Discount</span>
<span class="t" style="left:1271.96px;top:215.80px;font-size:16.7px;font-weight:700;color:#000;line-height:22px;transform:scaleX(1.0827);">8295.98</span>
<span class="t" style="left:984.42px;top:240.80px;font-size:16.7px;font-weight:700;color:#000;line-height:22px;transform:scaleX(0.9860);">Discount Amount</span>
<span class="t" style="left:1281.91px;top:240.80px;font-size:16.7px;font-weight:700;color:#000;line-height:22px;transform:scaleX(1.0868);">1659.2</span>
<span class="t" style="left:985.40px;top:265.80px;font-size:16.7px;font-weight:700;color:#000;line-height:22px;transform:scaleX(0.9787);">Total After Discount</span>
<span class="t" style="left:1271.85px;top:265.80px;font-size:16.7px;font-weight:700;color:#000;line-height:22px;transform:scaleX(1.0846);">6636.78</span>
<span class="t" style="left:984.90px;top:290.80px;font-size:16.7px;font-weight:700;color:#000;line-height:22px;transform:scaleX(0.9924);">Quote ID</span>
<span class="t" style="left:1166.86px;top:290.80px;font-size:16.7px;font-weight:700;color:#000;line-height:22px;transform:scaleX(1.0746);">Q-20260106-160913</span>
<span class="t" style="left:23.73px;top:359.65px;font-size:13.4px;font-weight:400;color:#000;line-height:17px;transform:scaleX(1.0392);">quote_id</span>
<span class="t" style="left:177.48px;top:359.65px;font-size:13.4px;font-weight:400;color:#000;line-height:17px;transform:scaleX(1.0301);">added_at</span>
<span class="t" style="left:321.44px;top:359.65px;font-size:13.4px;font-weight:400;color:#000;line-height:17px;transform:scaleX(1.0382);">sku_id</span>
<span class="t" style="left:396.45px;top:359.65px;font-size:13.4px;font-weight:400;color:#000;line-height:17px;transform:scaleX(0.9951);">sku_type</span>
<span class="t" style="left:461.98px;top:359.65px;font-size:13.4px;font-weight:400;color:#000;line-height:17px;transform:scaleX(1.0479);">display_name</span>
<span class="t" style="left:984.00px;top:359.65px;font-size:13.4px;font-weight:400;color:#000;line-height:17px;transform:scaleX(1.0072);">qty</span>
<span class="t" style="left:1165.92px;top:359.65px;font-size:13.4px;font-weight:400;color:#000;line-height:17px;transform:scaleX(1.0327);">unit_price_usd</span>
<span class="t" style="left:1342.30px;top:359.65px;font-size:13.4px;font-weight:400;color:#000;line-height:17px;transform:scaleX(1.0508);">line_total_usd</span>
<span class="t" style="left:1436.72px;top:359.65px;font-size:13.4px;font-weight:400;color:#000;line-height:17px;transform:scaleX(0.9700);">parent_sku_id</span>
<span class="t" style="left:23.77px;top:379.65px;font-size:13.4px;font-weight:700;color:#000;line-height:17px;transform:scaleX(0.9539);">Q-20260106-160913</span>
<span class="t" style="left:214.52px;top:379.65px;font-size:13.4px;font-weight:700;color:#000;line-height:17px;transform:scaleX(0.9611);">06/01/2026 16:09</span>
<span class="t" style="left:320.98px;top:379.65px;font-size:13.4px;font-weight:700;color:#000;line-height:17px;transform:scaleX(0.9573);">BND-00002</span>
<span class="t" style="left:396.01px;top:379.65px;font-size:13.4px;font-weight:700;color:#000;line-height:17px;transform:scaleX(0.9302);">BUNDLE</span>
<span class="t" style="left:461.74px;top:379.65px;font-size:13.4px;font-weight:700;color:#000;line-height:17px;transform:scaleX(0.9495);">Living Room Set Bundle 206</span>
<span class="t" style="left:1153.96px;top:379.65px;font-size:13.4px;font-weight:700;color:#000;line-height:17px;transform:scaleX(0.9350);">1</span>
<span class="t" style="left:1292.94px;top:379.65px;font-size:13.4px;font-weight:700;color:#000;line-height:17px;transform:scaleX(0.9350);">1146.17</span>
<span class="t" style="left:1387.14px;top:379.65px;font-size:13.4px;font-weight:700;color:#000;line-height:17px;transform:scaleX(0.9350);">1146.17</span>
<span class="t" style="left:23.68px;top:399.65px;font-size:13.4px;font-weight:400;color:#000;line-height:17px;transform:scaleX(0.9554);">Q-20260106-160913</span>
<span class="t" style="left:214.52px;top:399.65px;font-size:13.4px;font-weight:400;color:#000;line-height:17px;transform:scaleX(0.9690);">06/01/2026 16:09</span>
<span class="t" style="left:320.73px;top:399.65px;font-size:13.4px;font-weight:400;color:#000;line-height:17px;transform:scaleX(0.9309);">FG-00017</span>
<span class="t" style="left:395.77px;top:399.65px;font-size:13.4px;font-weight:400;color:#000;line-height:17px;transform:scaleX(0.8907);">PRODUCT</span>
<span class="t" style="left:470.55px;top:399.65px;font-size:13.4px;font-weight:400;color:#000;line-height:17px;transform:scaleX(0.8964);">? ? ? ? ? ? ? ? ? ? ? ? ? ? ? ? ? ? ? ? ? ? ? ? ?</span>
<span class="t" style="left:720.90px;top:399.65px;font-size:13.4px;font-weight:400;color:#000;line-height:17px;">Rustic Sofa - Black (M)</span>
<span class="t" style="left:1154.24px;top:399.65px;font-size:13.4px;font-weight:400;color:#000;line-height:17px;transform:scaleX(0.9350);">1</span>
<span class="t" style="left:1436.44px;top:399.65px;font-size:13.4px;font-weight:400;color:#000;line-height:17px;transform:scaleX(0.9602);">BND-00002</span>
<span class="t" style="left:23.68px;top:419.65px;font-size:13.4px;font-weight:400;color:#000;line-height:17px;transform:scaleX(0.9554);">Q-20260106-160913</span>
<span class="t" style="left:214.52px;top:419.65px;font-size:13.4px;font-weight:400;color:#000;line-height:17px;transform:scaleX(0.9690);">06/01/2026 16:09</span>
<span class="t" style="left:320.73px;top:419.65px;font-size:13.4px;font-weight:400;color:#000;line-height:17px;transform:scaleX(0.9293);">FG-00109</span>
<span class="t" style="left:395.77px;top:419.65px;font-size:13.4px;font-weight:400;color:#000;line-height:17px;transform:scaleX(0.8907);">PRODUCT</span>
<span class="t" style="left:470.55px;top:419.65px;font-size:13.4px;font-weight:400;color:#000;line-height:17px;transform:scaleX(0.8965);">? ? ? ? ? ? ? ? ? ? ? ? ? ? ? ? ? ? ? ? ? ? ? ?</span>
<span class="t" style="left:710.90px;top:419.65px;font-size:13.4px;font-weight:400;color:#000;line-height:17px;">Mid-century Coffee Table - Glossy White (S)</span>
<span class="t" style="left:1154.24px;top:419.65px;font-size:13.4px;font-weight:400;color:#000;line-height:17px;transform:scaleX(0.9350);">1</span>
<span class="t" style="left:1436.44px;top:419.65px;font-size:13.4px;font-weight:400;color:#000;line-height:17px;transform:scaleX(0.9602);">BND-00002</span>
<span class="t" style="left:23.68px;top:439.65px;font-size:13.4px;font-weight:400;color:#000;line-height:17px;transform:scaleX(0.9554);">Q-20260106-160913</span>
<span class="t" style="left:214.52px;top:439.65px;font-size:13.4px;font-weight:400;color:#000;line-height:17px;transform:scaleX(0.9690);">06/01/2026 16:09</span>
<span class="t" style="left:320.73px;top:439.65px;font-size:13.4px;font-weight:400;color:#000;line-height:17px;transform:scaleX(0.9293);">FG-00018</span>
<span class="t" style="left:395.77px;top:439.65px;font-size:13.4px;font-weight:400;color:#000;line-height:17px;transform:scaleX(0.8907);">PRODUCT</span>
<span class="t" style="left:470.55px;top:439.65px;font-size:13.4px;font-weight:400;color:#000;line-height:17px;transform:scaleX(0.8966);">? ? ? ? ? ? ? ? ? ? ? ? ? ? ? ? ? ? ? ? ? ? ?</span>
<span class="t" style="left:700.78px;top:439.65px;font-size:13.4px;font-weight:400;color:#000;line-height:17px;transform:scaleX(1.0160);">Industrial TV Stand - Black (M)</span>
<span class="t" style="left:1154.24px;top:439.65px;font-size:13.4px;font-weight:400;color:#000;line-height:17px;transform:scaleX(0.9350);">1</span>
<span class="t" style="left:1436.44px;top:439.65px;font-size:13.4px;font-weight:400;color:#000;line-height:17px;transform:scaleX(0.9602);">BND-00002</span>
<span class="t" style="left:23.77px;top:459.65px;font-size:13.4px;font-weight:700;color:#000;line-height:17px;transform:scaleX(0.9539);">Q-20260106-160913</span>
<span class="t" style="left:214.52px;top:459.65px;font-size:13.4px;font-weight:700;color:#000;line-height:17px;transform:scaleX(0.9611);">06/01/2026 16:09</span>
<span class="t" style="left:320.98px;top:459.65px;font-size:13.4px;font-weight:700;color:#000;line-height:17px;transform:scaleX(0.9587);">BND-00017</span>
<span class="t" style="left:396.01px;top:459.65px;font-size:13.4px;font-weight:700;color:#000;line-height:17px;transform:scaleX(0.9302);">BUNDLE</span>
<span class="t" style="left:461.73px;top:459.65px;font-size:13.4px;font-weight:700;color:#000;line-height:17px;transform:scaleX(0.9605);">Kitchen Set Bundle 410</span>
<span class="t" style="left:1153.96px;top:459.65px;font-size:13.4px;font-weight:700;color:#000;line-height:17px;transform:scaleX(0.9350);">1</span>
<span class="t" style="left:1292.16px;top:459.65px;font-size:13.4px;font-weight:700;color:#000;line-height:17px;transform:scaleX(0.9350);">1222.56</span>
<span class="t" style="left:1386.36px;top:459.65px;font-size:13.4px;font-weight:700;color:#000;line-height:17px;transform:scaleX(0.9350);">1222.56</span>
<span class="t" style="left:23.68px;top:479.65px;font-size:13.4px;font-weight:400;color:#000;line-height:17px;transform:scaleX(0.9554);">Q-20260106-160913</span>
<span class="t" style="left:214.52px;top:479.65px;font-size:13.4px;font-weight:400;color:#000;line-height:17px;transform:scaleX(0.9690);">06/01/2026 16:09</span>
<span class="t" style="left:320.73px;top:479.65px;font-size:13.4px;font-weight:400;color:#000;line-height:17px;transform:scaleX(0.9309);">FG-00091</span>
<span class="t" style="left:395.77px;top:479.65px;font-size:13.4px;font-weight:400;color:#000;line-height:17px;transform:scaleX(0.8907);">PRODUCT</span>
<span class="t" style="left:470.55px;top:479.65px;font-size:13.4px;font-weight:400;color:#000;line-height:17px;transform:scaleX(0.8966);">? ? ? ? ? ? ? ? ? ? ? ? ? ? ? ? ? ? ? ? ?</span>
<span class="t" style="left:680.88px;top:479.65px;font-size:13.4px;font-weight:400;color:#000;line-height:17px;transform:scaleX(1.0155);">Minimalist Kitchen Cabinet - Glossy White (XL)</span>
<span class="t" style="left:1154.24px;top:479.65px;font-size:13.4px;font-weight:400;color:#000;line-height:17px;transform:scaleX(0.9350);">2</span>
<span class="t" style="left:1436.44px;top:479.65px;font-size:13.4px;font-weight:400;color:#000;line-height:17px;transform:scaleX(0.9602);">BND-00017</span>
<span class="t" style="left:23.68px;top:499.65px;font-size:13.4px;font-weight:400;color:#000;line-height:17px;transform:scaleX(0.9554);">Q-20260106-160913</span>
<span class="t" style="left:214.52px;top:499.65px;font-size:13.4px;font-weight:400;color:#000;line-height:17px;transform:scaleX(0.9690);">06/01/2026 16:09</span>
<span class="t" style="left:320.73px;top:499.65px;font-size:13.4px;font-weight:400;color:#000;line-height:17px;transform:scaleX(0.9262);">FG-00174</span>
<span class="t" style="left:395.77px;top:499.65px;font-size:13.4px;font-weight:400;color:#000;line-height:17px;transform:scaleX(0.8907);">PRODUCT</span>
<span class="t" style="left:470.55px;top:499.65px;font-size:13.4px;font-weight:400;color:#000;line-height:17px;transform:scaleX(0.8967);">? ? ? ? ? ? ? ? ? ? ? ? ? ? ? ? ? ? ? ?</span>
<span class="t" style="left:670.88px;top:499.65px;font-size:13.4px;font-weight:400;color:#000;line-height:17px;transform:scaleX(1.0156);">Modern Table - Black (L)</span>
<span class="t" style="left:1154.24px;top:499.65px;font-size:13.4px;font-weight:400;color:#000;line-height:17px;transform:scaleX(0.9350);">1</span>
<span class="t" style="left:1436.44px;top:499.65px;font-size:13.4px;font-weight:400;color:#000;line-height:17px;transform:scaleX(0.9602);">BND-00017</span>
<span class="t" style="left:23.77px;top:519.65px;font-size:13.4px;font-weight:700;color:#000;line-height:17px;transform:scaleX(0.9539);">Q-20260106-160913</span>
<span class="t" style="left:214.52px;top:519.65px;font-size:13.4px;font-weight:700;color:#000;line-height:17px;transform:scaleX(0.9611);">06/01/2026 16:09</span>
<span class="t" style="left:320.98px;top:519.65px;font-size:13.4px;font-weight:700;color:#000;line-height:17px;transform:scaleX(0.9573);">BND-00009</span>
<span class="t" style="left:396.01px;top:519.65px;font-size:13.4px;font-weight:700;color:#000;line-height:17px;transform:scaleX(0.9302);">BUNDLE</span>
<span class="t" style="left:461.74px;top:519.65px;font-size:13.4px;font-weight:700;color:#000;line-height:17px;transform:scaleX(0.9490);">Living Room Set Bundle 731</span>
<span class="t" style="left:1153.96px;top:519.65px;font-size:13.4px;font-weight:700;color:#000;line-height:17px;transform:scaleX(0.9350);">1</span>
<span class="t" style="left:1292.16px;top:519.65px;font-size:13.4px;font-weight:700;color:#000;line-height:17px;transform:scaleX(0.9350);">1080.66</span>
<span class="t" style="left:1386.36px;top:519.65px;font-size:13.4px;font-weight:700;color:#000;line-height:17px;transform:scaleX(0.9350);">1080.66</span>
<span class="t" style="left:23.68px;top:539.65px;font-size:13.4px;font-weight:400;color:#000;line-height:17px;transform:scaleX(0.9554);">Q-20260106-160913</span>
<span class="t" style="left:214.52px;top:539.65px;font-size:13.4px;font-weight:400;color:#000;line-height:17px;transform:scaleX(0.9690);">06/01/2026 16:09</span>
<span class="t" style="left:320.73px;top:539.65px;font-size:13.4px;font-weight:400;color:#000;line-height:17px;transform:scaleX(0.9309);">FG-00017</span>
<span class="t" style="left:395.77px;top:539.65px;font-size:13.4px;font-weight:400;color:#000;line-height:17px;transform:scaleX(0.8907);">PRODUCT</span>
<span class="t" style="left:470.55px;top:539.65px;font-size:13.4px;font-weight:400;color:#000;line-height:17px;transform:scaleX(0.8969);">? ? ? ? ? ? ? ? ? ? ? ? ? ? ? ? ? ?</span>
<span class="t" style="left:650.90px;top:539.65px;font-size:13.4px;font-weight:400;color:#000;line-height:17px;">Rustic Sofa - Black (M)</span>
<span class="t" style="left:1154.24px;top:539.65px;font-size:13.4px;font-weight:400;color:#000;line-height:17px;transform:scaleX(0.9350);">1</span>
<span class="t" style="left:1436.45px;top:539.65px;font-size:13.4px;font-weight:400;color:#000;line-height:17px;transform:scaleX(0.9588);">BND-00009</span>
<span class="t" style="left:23.68px;top:559.65px;font-size:13.4px;font-weight:400;color:#000;line-height:17px;transform:scaleX(0.9554);">Q-20260106-160913</span>
<span class="t" style="left:214.52px;top:559.65px;font-size:13.4px;font-weight:400;color:#000;line-height:17px;transform:scaleX(0.9690);">06/01/2026 16:09</span>
<span class="t" style="left:320.73px;top:559.65px;font-size:13.4px;font-weight:400;color:#000;line-height:17px;transform:scaleX(0.9277);">FG-00150</span>
<span class="t" style="left:395.77px;top:559.65px;font-size:13.4px;font-weight:400;color:#000;line-height:17px;transform:scaleX(0.8907);">PRODUCT</span>
<span class="t" style="left:470.55px;top:559.65px;font-size:13.4px;font-weight:400;color:#000;line-height:17px;transform:scaleX(0.8969);">? ? ? ? ? ? ? ? ? ? ? ? ? ? ? ? ?</span>
<span class="t" style="left:640.89px;top:559.65px;font-size:13.4px;font-weight:400;color:#000;line-height:17px;transform:scaleX(1.0124);">Rustic Coffee Table - Walnut (M)</span>
<span class="t" style="left:1154.24px;top:559.65px;font-size:13.4px;font-weight:400;color:#000;line-height:17px;transform:scaleX(0.9350);">1</span>
<span class="t" style="left:1436.45px;top:559.65px;font-size:13.4px;font-weight:400;color:#000;line-height:17px;transform:scaleX(0.9588);">BND-00009</span>
<span class="t" style="left:23.68px;top:579.65px;font-size:13.4px;font-weight:400;color:#000;line-height:17px;transform:scaleX(0.9554);">Q-20260106-160913</span>
<span class="t" style="left:214.52px;top:579.65px;font-size:13.4px;font-weight:400;color:#000;line-height:17px;transform:scaleX(0.9690);">06/01/2026 16:09</span>
<span class="t" style="left:320.73px;top:579.65px;font-size:13.4px;font-weight:400;color:#000;line-height:17px;transform:scaleX(0.9293);">FG-00049</span>
<span class="t" style="left:395.77px;top:579.65px;font-size:13.4px;font-weight:400;color:#000;line-height:17px;transform:scaleX(0.8907);">PRODUCT</span>
<span class="t" style="left:470.55px;top:579.65px;font-size:13.4px;font-weight:400;color:#000;line-height:17px;transform:scaleX(0.8970);">? ? ? ? ? ? ? ? ? ? ? ? ? ? ? ?</span>
<span class="t" style="left:630.92px;top:579.65px;font-size:13.4px;font-weight:400;color:#000;line-height:17px;transform:scaleX(0.9806);">Mid-century TV Stand - Matte Gray (XL)</span>
<span class="t" style="left:1154.24px;top:579.65px;font-size:13.4px;font-weight:400;color:#000;line-height:17px;transform:scaleX(0.9350);">1</span>
<span class="t" style="left:1436.45px;top:579.65px;font-size:13.4px;font-weight:400;color:#000;line-height:17px;transform:scaleX(0.9588);">BND-00009</span>
<span class="t" style="left:23.77px;top:599.65px;font-size:13.4px;font-weight:700;color:#000;line-height:17px;transform:scaleX(0.9539);">Q-20260106-160913</span>
<span class="t" style="left:214.52px;top:599.65px;font-size:13.4px;font-weight:700;color:#000;line-height:17px;transform:scaleX(0.9611);">06/01/2026 16:09</span>
<span class="t" style="left:320.99px;top:599.65px;font-size:13.4px;font-weight:700;color:#000;line-height:17px;transform:scaleX(0.9559);">BND-00005</span>
<span class="t" style="left:396.01px;top:599.65px;font-size:13.4px;font-weight:700;color:#000;line-height:17px;transform:scaleX(0.9302);">BUNDLE</span>
<span class="t" style="left:461.73px;top:599.65px;font-size:13.4px;font-weight:700;color:#000;line-height:17px;transform:scaleX(0.9580);">Bathroom Set Bundle 171</span>
<span class="t" style="left:1154.05px;top:599.65px;font-size:13.4px;font-weight:700;color:#000;line-height:17px;transform:scaleX(0.9350);">2</span>
<span class="t" style="left:1299.12px;top:599.65px;font-size:13.4px;font-weight:700;color:#000;line-height:17px;transform:scaleX(0.9350);">684.42</span>
<span class="t" style="left:1385.99px;top:599.65px;font-size:13.4px;font-weight:700;color:#000;line-height:17px;transform:scaleX(0.9350);">1368.84</span>
<span class="t" style="left:23.68px;top:619.65px;font-size:13.4px;font-weight:400;color:#000;line-height:17px;transform:scaleX(0.9554);">Q-20260106-160913</span>
<span class="t" style="left:214.52px;top:619.65px;font-size:13.4px;font-weight:400;color:#000;line-height:17px;transform:scaleX(0.9690);">06/01/2026 16:09</span>
<span class="t" style="left:320.73px;top:619.65px;font-size:13.4px;font-weight:400;color:#000;line-height:17px;transform:scaleX(0.9309);">FG-00037</span>
<span class="t" style="left:395.77px;top:619.65px;font-size:13.4px;font-weight:400;color:#000;line-height:17px;transform:scaleX(0.8907);">PRODUCT</span>
<span class="t" style="left:470.55px;top:619.65px;font-size:13.4px;font-weight:400;color:#000;line-height:17px;transform:scaleX(0.8972);">? ? ? ? ? ? ? ? ? ? ? ? ? ?</span>
<span class="t" style="left:610.93px;top:619.65px;font-size:13.4px;font-weight:400;color:#000;line-height:17px;transform:scaleX(0.9768);">Rustic Sofa - Matte Gray (L)</span>
<span class="t" style="left:1154.24px;top:619.65px;font-size:13.4px;font-weight:400;color:#000;line-height:17px;transform:scaleX(0.9350);">2</span>
<span class="t" style="left:1436.45px;top:619.65px;font-size:13.4px;font-weight:400;color:#000;line-height:17px;transform:scaleX(0.9588);">BND-00005</span>
<span class="t" style="left:23.68px;top:639.65px;font-size:13.4px;font-weight:400;color:#000;line-height:17px;transform:scaleX(0.9554);">Q-20260106-160913</span>
<span class="t" style="left:214.52px;top:639.65px;font-size:13.4px;font-weight:400;color:#000;line-height:17px;transform:scaleX(0.9690);">06/01/2026 16:09</span>
<span class="t" style="left:320.73px;top:639.65px;font-size:13.4px;font-weight:400;color:#000;line-height:17px;transform:scaleX(0.9293);">FG-00109</span>
<span class="t" style="left:395.77px;top:639.65px;font-size:13.4px;font-weight:400;color:#000;line-height:17px;transform:scaleX(0.8907);">PRODUCT</span>
<span class="t" style="left:470.55px;top:639.65px;font-size:13.4px;font-weight:400;color:#000;line-height:17px;transform:scaleX(0.8974);">? ? ? ? ? ? ? ? ? ? ? ? ?</span>
<span class="t" style="left:600.90px;top:639.65px;font-size:13.4px;font-weight:400;color:#000;line-height:17px;">Mid-century Coffee Table - Glossy White (S)</span>
<span class="t" style="left:1154.24px;top:639.65px;font-size:13.4px;font-weight:400;color:#000;line-height:17px;transform:scaleX(0.9350);">2</span>
<span class="t" style="left:1436.45px;top:639.65px;font-size:13.4px;font-weight:400;color:#000;line-height:17px;transform:scaleX(0.9588);">BND-00005</span>
<span class="t" style="left:23.77px;top:659.65px;font-size:13.4px;font-weight:700;color:#000;line-height:17px;transform:scaleX(0.9539);">Q-20260106-160913</span>
<span class="t" style="left:214.52px;top:659.65px;font-size:13.4px;font-weight:700;color:#000;line-height:17px;transform:scaleX(0.9611);">06/01/2026 16:09</span>
<span class="t" style="left:320.98px;top:659.65px;font-size:13.4px;font-weight:700;color:#000;line-height:17px;transform:scaleX(0.9573);">BND-00016</span>
<span class="t" style="left:396.01px;top:659.65px;font-size:13.4px;font-weight:700;color:#000;line-height:17px;transform:scaleX(0.9302);">BUNDLE</span>
<span class="t" style="left:461.73px;top:659.65px;font-size:13.4px;font-weight:700;color:#000;line-height:17px;transform:scaleX(0.9565);">Bedroom Set Bundle 325</span>
<span class="t" style="left:1153.96px;top:659.65px;font-size:13.4px;font-weight:700;color:#000;line-height:17px;transform:scaleX(0.9350);">1</span>
<span class="t" style="left:1292.94px;top:659.65px;font-size:13.4px;font-weight:700;color:#000;line-height:17px;transform:scaleX(0.9350);">1197.47</span>
<span class="t" style="left:1387.14px;top:659.65px;font-size:13.4px;font-weight:700;color:#000;line-height:17px;transform:scaleX(0.9350);">1197.47</span>
<span class="t" style="left:23.68px;top:679.65px;font-size:13.4px;font-weight:400;color:#000;line-height:17px;transform:scaleX(0.9554);">Q-20260106-160913</span>
<span class="t" style="left:214.52px;top:679.65px;font-size:13.4px;font-weight:400;color:#000;line-height:17px;transform:scaleX(0.9690);">06/01/2026 16:09</span>
<span class="t" style="left:320.73px;top:679.65px;font-size:13.4px;font-weight:400;color:#000;line-height:17px;transform:scaleX(0.9309);">FG-00022</span>
<span class="t" style="left:395.77px;top:679.65px;font-size:13.4px;font-weight:400;color:#000;line-height:17px;transform:scaleX(0.8907);">PRODUCT</span>
<span class="t" style="left:470.55px;top:679.65px;font-size:13.4px;font-weight:400;color:#000;line-height:17px;transform:scaleX(0.8978);">? ? ? ? ? ? ? ? ? ? ?</span>
<span class="t" style="left:581.40px;top:679.65px;font-size:13.4px;font-weight:400;color:#000;line-height:17px;transform:scaleX(0.9951);">Classic Bed - Glossy White (M)</span>
<span class="t" style="left:1154.24px;top:679.65px;font-size:13.4px;font-weight:400;color:#000;line-height:17px;transform:scaleX(0.9350);">1</span>
<span class="t" style="left:1436.45px;top:679.65px;font-size:13.4px;font-weight:400;color:#000;line-height:17px;transform:scaleX(0.9588);">BND-00016</span>
<span class="t" style="left:23.68px;top:699.65px;font-size:13.4px;font-weight:400;color:#000;line-height:17px;transform:scaleX(0.9554);">Q-20260106-160913</span>
<span class="t" style="left:214.52px;top:699.65px;font-size:13.4px;font-weight:400;color:#000;line-height:17px;transform:scaleX(0.9690);">06/01/2026 16:09</span>
<span class="t" style="left:320.73px;top:699.65px;font-size:13.4px;font-weight:400;color:#000;line-height:17px;transform:scaleX(0.9293);">FG-00085</span>
<span class="t" style="left:395.77px;top:699.65px;font-size:13.4px;font-weight:400;color:#000;line-height:17px;transform:scaleX(0.8907);">PRODUCT</span>
<span class="t" style="left:470.55px;top:699.65px;font-size:13.4px;font-weight:400;color:#000;line-height:17px;transform:scaleX(0.8980);">? ? ? ? ? ? ? ? ? ?</span>
<span class="t" style="left:570.90px;top:699.65px;font-size:13.4px;font-weight:400;color:#000;line-height:17px;transform:scaleX(0.9966);">Rustic Nightstand - Matte Gray (XS)</span>
<span class="t" style="left:1154.24px;top:699.65px;font-size:13.4px;font-weight:400;color:#000;line-height:17px;transform:scaleX(0.9350);">2</span>
<span class="t" style="left:1436.45px;top:699.65px;font-size:13.4px;font-weight:400;color:#000;line-height:17px;transform:scaleX(0.9588);">BND-00016</span>
<span class="t" style="left:23.77px;top:719.65px;font-size:13.4px;font-weight:700;color:#000;line-height:17px;transform:scaleX(0.9539);">Q-20260106-160913</span>
<span class="t" style="left:214.52px;top:719.65px;font-size:13.4px;font-weight:700;color:#000;line-height:17px;transform:scaleX(0.9611);">06/01/2026 16:09</span>
<span class="t" style="left:320.98px;top:719.65px;font-size:13.4px;font-weight:700;color:#000;line-height:17px;transform:scaleX(0.9573);">BND-00003</span>
<span class="t" style="left:396.01px;top:719.65px;font-size:13.4px;font-weight:700;color:#000;line-height:17px;transform:scaleX(0.9302);">BUNDLE</span>
<span class="t" style="left:461.73px;top:719.65px;font-size:13.4px;font-weight:700;color:#000;line-height:17px;transform:scaleX(0.9571);">Bedroom Set Bundle 933</span>
<span class="t" style="left:1154.05px;top:719.65px;font-size:13.4px;font-weight:700;color:#000;line-height:17px;transform:scaleX(0.9350);">2</span>
<span class="t" style="left:1299.12px;top:719.65px;font-size:13.4px;font-weight:700;color:#000;line-height:17px;transform:scaleX(0.9350);">847.82</span>
<span class="t" style="left:1385.99px;top:719.65px;font-size:13.4px;font-weight:700;color:#000;line-height:17px;transform:scaleX(0.9350);">1695.64</span>
<span class="t" style="left:23.68px;top:739.65px;font-size:13.4px;font-weight:400;color:#000;line-height:17px;transform:scaleX(0.9554);">Q-20260106-160913</span>
<span class="t" style="left:214.52px;top:739.65px;font-size:13.4px;font-weight:400;color:#000;line-height:17px;transform:scaleX(0.9690);">06/01/2026 16:09</span>
<span class="t" style="left:320.73px;top:739.65px;font-size:13.4px;font-weight:400;color:#000;line-height:17px;transform:scaleX(0.9262);">FG-00104</span>
<span class="t" style="left:395.77px;top:739.65px;font-size:13.4px;font-weight:400;color:#000;line-height:17px;transform:scaleX(0.8907);">PRODUCT</span>
<span class="t" style="left:470.55px;top:739.65px;font-size:13.4px;font-weight:400;color:#000;line-height:17px;transform:scaleX(0.8988);">? ? ? ? ? ? ? ?</span>
<span class="t" style="left:551.41px;top:739.65px;font-size:13.4px;font-weight:400;color:#000;line-height:17px;transform:scaleX(0.9912);">Scandinavian Bed - Matte Gray (L)</span>
<span class="t" style="left:1154.24px;top:739.65px;font-size:13.4px;font-weight:400;color:#000;line-height:17px;transform:scaleX(0.9350);">2</span>
<span class="t" style="left:1436.45px;top:739.65px;font-size:13.4px;font-weight:400;color:#000;line-height:17px;transform:scaleX(0.9588);">BND-00003</span>
<span class="t" style="left:23.68px;top:759.65px;font-size:13.4px;font-weight:400;color:#000;line-height:17px;transform:scaleX(0.9554);">Q-20260106-160913</span>
<span class="t" style="left:214.52px;top:759.65px;font-size:13.4px;font-weight:400;color:#000;line-height:17px;transform:scaleX(0.9690);">06/01/2026 16:09</span>
<span class="t" style="left:320.73px;top:759.65px;font-size:13.4px;font-weight:400;color:#000;line-height:17px;transform:scaleX(0.9309);">FG-00147</span>
<span class="t" style="left:395.77px;top:759.65px;font-size:13.4px;font-weight:400;color:#000;line-height:17px;transform:scaleX(0.8907);">PRODUCT</span>
<span class="t" style="left:470.55px;top:759.65px;font-size:13.4px;font-weight:400;color:#000;line-height:17px;transform:scaleX(0.8993);">? ? ? ? ? ? ?</span>
<span class="t" style="left:541.39px;top:759.65px;font-size:13.4px;font-weight:400;color:#000;line-height:17px;transform:scaleX(1.0179);">Scandinavian Nightstand - Glossy White (L)</span>
<span class="t" style="left:1153.96px;top:759.65px;font-size:13.4px;font-weight:400;color:#000;line-height:17px;transform:scaleX(0.9350);">4</span>
<span class="t" style="left:1436.45px;top:759.65px;font-size:13.4px;font-weight:400;color:#000;line-height:17px;transform:scaleX(0.9588);">BND-00003</span>
<span class="t" style="left:23.68px;top:779.65px;font-size:13.4px;font-weight:400;color:#000;line-height:17px;transform:scaleX(0.9554);">Q-20260106-160913</span>
<span class="t" style="left:214.52px;top:779.65px;font-size:13.4px;font-weight:400;color:#000;line-height:17px;transform:scaleX(0.9690);">06/01/2026 16:09</span>
<span class="t" style="left:320.73px;top:779.65px;font-size:13.4px;font-weight:400;color:#000;line-height:17px;transform:scaleX(0.9293);">FG-00108</span>
<span class="t" style="left:395.77px;top:779.65px;font-size:13.4px;font-weight:400;color:#000;line-height:17px;transform:scaleX(0.8907);">PRODUCT</span>
<span class="t" style="left:470.55px;top:779.65px;font-size:13.4px;font-weight:400;color:#000;line-height:17px;transform:scaleX(0.8998);">? ? ? ? ? ?</span>
<span class="t" style="left:531.40px;top:779.65px;font-size:13.4px;font-weight:400;color:#000;line-height:17px;transform:scaleX(1.0072);">Scandinavian Wardrobe - Matte Gray (L)</span>
<span class="t" style="left:1154.24px;top:779.65px;font-size:13.4px;font-weight:400;color:#000;line-height:17px;transform:scaleX(0.9350);">2</span>
<span class="t" style="left:1436.45px;top:779.65px;font-size:13.4px;font-weight:400;color:#000;line-height:17px;transform:scaleX(0.9588);">BND-00003</span>
<span class="t" style="left:23.77px;top:799.65px;font-size:13.4px;font-weight:700;color:#000;line-height:17px;transform:scaleX(0.9539);">Q-20260106-160913</span>
<span class="t" style="left:214.52px;top:799.65px;font-size:13.4px;font-weight:700;color:#000;line-height:17px;transform:scaleX(0.9611);">06/01/2026 16:09</span>
<span class="t" style="left:320.98px;top:799.65px;font-size:13.4px;font-weight:700;color:#000;line-height:17px;transform:scaleX(0.9573);">BND-00030</span>
<span class="t" style="left:396.01px;top:799.65px;font-size:13.4px;font-weight:700;color:#000;line-height:17px;transform:scaleX(0.9302);">BUNDLE</span>
<span class="t" style="left:461.72px;top:799.65px;font-size:13.4px;font-weight:700;color:#000;line-height:17px;transform:scaleX(0.9792);">Home Office Set Bundle 215</span>
<span class="t" style="left:1153.96px;top:799.65px;font-size:13.4px;font-weight:700;color:#000;line-height:17px;transform:scaleX(0.9350);">1</span>
<span class="t" style="left:1298.74px;top:799.65px;font-size:13.4px;font-weight:700;color:#000;line-height:17px;transform:scaleX(0.9350);">584.64</span>
<span class="t" style="left:1392.94px;top:799.65px;font-size:13.4px;font-weight:700;color:#000;line-height:17px;transform:scaleX(0.9350);">584.64</span>
<span class="t" style="left:23.68px;top:819.65px;font-size:13.4px;font-weight:400;color:#000;line-height:17px;transform:scaleX(0.9554);">Q-20260106-160913</span>
<span class="t" style="left:214.52px;top:819.65px;font-size:13.4px;font-weight:400;color:#000;line-height:17px;transform:scaleX(0.9690);">06/01/2026 16:09</span>
<span class="t" style="left:320.73px;top:819.65px;font-size:13.4px;font-weight:400;color:#000;line-height:17px;transform:scaleX(0.9293);">FG-00133</span>
<span class="t" style="left:395.77px;top:819.65px;font-size:13.4px;font-weight:400;color:#000;line-height:17px;transform:scaleX(0.8907);">PRODUCT</span>
<span class="t" style="left:470.55px;top:819.65px;font-size:13.4px;font-weight:400;color:#000;line-height:17px;transform:scaleX(0.9025);">? ? ? ?</span>
<span class="t" style="left:510.75px;top:819.65px;font-size:13.4px;font-weight:400;color:#000;line-height:17px;transform:scaleX(1.0409);">Industrial Office Desk - Natural (M)</span>
<span class="t" style="left:1154.24px;top:819.65px;font-size:13.4px;font-weight:400;color:#000;line-height:17px;transform:scaleX(0.9350);">1</span>
<span class="t" style="left:1436.45px;top:819.65px;font-size:13.4px;font-weight:400;color:#000;line-height:17px;transform:scaleX(0.9574);">BND-00030</span>
<span class="t" style="left:23.68px;top:839.65px;font-size:13.4px;font-weight:400;color:#000;line-height:17px;transform:scaleX(0.9554);">Q-20260106-160913</span>
<span class="t" style="left:214.52px;top:839.65px;font-size:13.4px;font-weight:400;color:#000;line-height:17px;transform:scaleX(0.9690);">06/01/2026 16:09</span>
<span class="t" style="left:320.71px;top:839.65px;font-size:13.4px;font-weight:400;color:#000;line-height:17px;transform:scaleX(0.9438);">FG-00110</span>
<span class="t" style="left:395.77px;top:839.65px;font-size:13.4px;font-weight:400;color:#000;line-height:17px;transform:scaleX(0.8907);">PRODUCT</span>
<span class="t" style="left:470.55px;top:839.65px;font-size:13.4px;font-weight:400;color:#000;line-height:17px;transform:scaleX(0.9049);">? ? ?</span>
<span class="t" style="left:501.40px;top:839.65px;font-size:13.4px;font-weight:400;color:#000;line-height:17px;transform:scaleX(0.9960);">Classic Chair - Oak (S)</span>
<span class="t" style="left:1154.24px;top:839.65px;font-size:13.4px;font-weight:400;color:#000;line-height:17px;transform:scaleX(0.9350);">1</span>
<span class="t" style="left:1436.45px;top:839.65px;font-size:13.4px;font-weight:400;color:#000;line-height:17px;transform:scaleX(0.9574);">BND-00030</span>
<span class="t" style="left:23.68px;top:859.65px;font-size:13.4px;font-weight:400;color:#000;line-height:17px;transform:scaleX(0.9554);">Q-20260106-160913</span>
<span class="t" style="left:214.52px;top:859.65px;font-size:13.4px;font-weight:400;color:#000;line-height:17px;transform:scaleX(0.9690);">06/01/2026 16:09</span>
<span class="t" style="left:320.73px;top:859.65px;font-size:13.4px;font-weight:400;color:#000;line-height:17px;transform:scaleX(0.9293);">FG-00058</span>
<span class="t" style="left:395.77px;top:859.65px;font-size:13.4px;font-weight:400;color:#000;line-height:17px;transform:scaleX(0.8907);">PRODUCT</span>
<span class="t" style="left:470.54px;top:859.65px;font-size:13.4px;font-weight:400;color:#000;line-height:17px;transform:scaleX(0.9110);">? ?</span>
<span class="t" style="left:490.89px;top:859.65px;font-size:13.4px;font-weight:400;color:#000;line-height:17px;transform:scaleX(1.0124);">Mid-century Bookshelf - Oak (S)</span>
<span class="t" style="left:1154.24px;top:859.65px;font-size:13.4px;font-weight:400;color:#000;line-height:17px;transform:scaleX(0.9350);">1</span>
<span class="t" style="left:1436.45px;top:859.65px;font-size:13.4px;font-weight:400;color:#000;line-height:17px;transform:scaleX(0.9574);">BND-00030</span>
<div style="left:1590.3px;top:192px;width:121.0px;height:39px;background:#f0f0f0;box-sizing:border-box;border-top:1px solid #fff;border-left:1px solid #fff;border-right:1px solid #696969;border-bottom:1px solid #696969;box-shadow:inset -1px -1px 0 #a0a0a0, inset 1px 1px 0 #e3e3e3"></div>
<span class="t" style="left:1609.41px;top:202.00px;font-size:14.6px;font-weight:400;color:#000;line-height:19px;transform:scaleX(0.9040);">Update Quote</span>
<div style="left:1590.3px;top:241.6px;width:121.0px;height:39.400000000000006px;background:#f0f0f0;box-sizing:border-box;border-top:1px solid #fff;border-left:1px solid #fff;border-right:1px solid #696969;border-bottom:1px solid #696969;box-shadow:inset -1px -1px 0 #a0a0a0, inset 1px 1px 0 #e3e3e3"></div>
<span class="t" style="left:1617.71px;top:251.60px;font-size:14.6px;font-weight:400;color:#000;line-height:19px;transform:scaleX(0.8991);">New Quote</span>
<div style="left:1590.3px;top:291.5px;width:121.0px;height:39.5px;background:#f0f0f0;box-sizing:border-box;border-top:1px solid #fff;border-left:1px solid #fff;border-right:1px solid #696969;border-bottom:1px solid #696969;box-shadow:inset -1px -1px 0 #a0a0a0, inset 1px 1px 0 #e3e3e3"></div>
<span class="t" style="left:1609.71px;top:302.00px;font-size:14.6px;font-weight:400;color:#000;line-height:19px;transform:scaleX(0.8977);">Delete Line(s)</span>
<div style="left:1718.3px;top:190.5px;width:121.10000000000014px;height:39.19999999999999px;background:#f0f0f0;box-sizing:border-box;border-top:1px solid #fff;border-left:1px solid #fff;border-right:1px solid #696969;border-bottom:1px solid #696969;box-shadow:inset -1px -1px 0 #a0a0a0, inset 1px 1px 0 #e3e3e3"></div>
<span class="t" style="left:1746.16px;top:201.10px;font-size:14.6px;font-weight:400;color:#000;line-height:19px;transform:scaleX(0.8577);">Export PDF</span>
<div style="left:1719.2px;top:244.8px;width:121.09999999999991px;height:43.89999999999998px;background:#f0f0f0;box-sizing:border-box;border-top:1px solid #fff;border-left:1px solid #fff;border-right:1px solid #696969;border-bottom:1px solid #696969;box-shadow:inset -1px -1px 0 #a0a0a0, inset 1px 1px 0 #e3e3e3"></div>
<span class="t" style="left:1743.53px;top:257.80px;font-size:14.6px;font-weight:400;color:#000;line-height:19px;transform:scaleX(0.8826);">Export Excel</span>
<div style="left:180px;top:190px;width:24px;height:21px;border:1px solid #dddcdc;border-radius:3px;background:#e9e8e8;box-sizing:border-box"><svg width="22" height="19" viewBox="0 0 22 19" fill="none" style="left:0;top:0"><path d="M7 14l6-6M13 4v3M11.5 5.5h3M16 9v2M15 10h2" stroke="#d0cfcf" stroke-width="1.2"/></svg></div>
<div style="left:0px;top:168px;width:1894px;height:19px;background:#f0f0f0"></div>
<div style="left:0px;top:188px;width:21px;height:740px;background:#f0f0f0"></div>
<div style="left:22px;top:168px;width:153px;height:19px;background:#d3d3d3"></div>
<div style="left:0px;top:188px;width:21px;height:24px;background:#d3d3d3"></div>
<div style="left:175px;top:168px;width:1px;height:19px;background:#bcbcbc"></div>
<div style="left:318px;top:168px;width:1px;height:19px;background:#bcbcbc"></div>
<div style="left:393px;top:168px;width:1px;height:19px;background:#bcbcbc"></div>
<div style="left:459px;top:168px;width:1px;height:19px;background:#bcbcbc"></div>
<div style="left:981px;top:168px;width:1px;height:19px;background:#bcbcbc"></div>
<div style="left:1163px;top:168px;width:1px;height:19px;background:#bcbcbc"></div>
<div style="left:1340px;top:168px;width:1px;height:19px;background:#bcbcbc"></div>
<div style="left:1434px;top:168px;width:1px;height:19px;background:#bcbcbc"></div>
<div style="left:1522px;top:168px;width:1px;height:19px;background:#bcbcbc"></div>
<div style="left:1586px;top:168px;width:1px;height:19px;background:#bcbcbc"></div>
<div style="left:1713px;top:168px;width:1px;height:19px;background:#bcbcbc"></div>
<div style="left:1777px;top:168px;width:1px;height:19px;background:#bcbcbc"></div>
<div style="left:1841px;top:168px;width:1px;height:19px;background:#bcbcbc"></div>
<div style="left:1905px;top:168px;width:1px;height:19px;background:#bcbcbc"></div>
<div style="left:0px;top:212px;width:21px;height:1px;background:#c4c4c4"></div>
<div style="left:0px;top:237px;width:21px;height:1px;background:#c4c4c4"></div>
<div style="left:0px;top:262px;width:21px;height:1px;background:#c4c4c4"></div>
<div style="left:0px;top:287px;width:21px;height:1px;background:#c4c4c4"></div>
<div style="left:0px;top:312px;width:21px;height:1px;background:#c4c4c4"></div>
<div style="left:0px;top:337px;width:21px;height:1px;background:#c4c4c4"></div>
<div style="left:0px;top:357px;width:21px;height:1px;background:#c4c4c4"></div>
<div style="left:0px;top:377px;width:21px;height:1px;background:#c4c4c4"></div>
<div style="left:0px;top:397px;width:21px;height:1px;background:#c4c4c4"></div>
<div style="left:0px;top:417px;width:21px;height:1px;background:#c4c4c4"></div>
<div style="left:0px;top:437px;width:21px;height:1px;background:#c4c4c4"></div>
<div style="left:0px;top:457px;width:21px;height:1px;background:#c4c4c4"></div>
<div style="left:0px;top:477px;width:21px;height:1px;background:#c4c4c4"></div>
<div style="left:0px;top:497px;width:21px;height:1px;background:#c4c4c4"></div>
<div style="left:0px;top:517px;width:21px;height:1px;background:#c4c4c4"></div>
<div style="left:0px;top:537px;width:21px;height:1px;background:#c4c4c4"></div>
<div style="left:0px;top:557px;width:21px;height:1px;background:#c4c4c4"></div>
<div style="left:0px;top:577px;width:21px;height:1px;background:#c4c4c4"></div>
<div style="left:0px;top:597px;width:21px;height:1px;background:#c4c4c4"></div>
<div style="left:0px;top:617px;width:21px;height:1px;background:#c4c4c4"></div>
<div style="left:0px;top:637px;width:21px;height:1px;background:#c4c4c4"></div>
<div style="left:0px;top:657px;width:21px;height:1px;background:#c4c4c4"></div>
<div style="left:0px;top:677px;width:21px;height:1px;background:#c4c4c4"></div>
<div style="left:0px;top:697px;width:21px;height:1px;background:#c4c4c4"></div>
<div style="left:0px;top:717px;width:21px;height:1px;background:#c4c4c4"></div>
<div style="left:0px;top:737px;width:21px;height:1px;background:#c4c4c4"></div>
<div style="left:0px;top:757px;width:21px;height:1px;background:#c4c4c4"></div>
<div style="left:0px;top:777px;width:21px;height:1px;background:#c4c4c4"></div>
<div style="left:0px;top:797px;width:21px;height:1px;background:#c4c4c4"></div>
<div style="left:0px;top:817px;width:21px;height:1px;background:#c4c4c4"></div>
<div style="left:0px;top:837px;width:21px;height:1px;background:#c4c4c4"></div>
<div style="left:0px;top:857px;width:21px;height:1px;background:#c4c4c4"></div>
<div style="left:0px;top:877px;width:21px;height:1px;background:#c4c4c4"></div>
<div style="left:0px;top:897px;width:21px;height:1px;background:#c4c4c4"></div>
<div style="left:0px;top:917px;width:21px;height:1px;background:#c4c4c4"></div>
<div style="left:0px;top:937px;width:21px;height:1px;background:#c4c4c4"></div>
<div style="left:0px;top:187px;width:1894px;height:1px;background:#9e9e9e"></div>
<div style="left:21px;top:168px;width:1px;height:760px;background:#9e9e9e"></div>
<svg style="left:3px;top:171px;" width="16" height="15" viewBox="0 0 16 15" fill="none"><path d="M14 2V13H3Z" fill="#b9b9b9"/></svg>
<span class="t" style="left:94.35px;top:169.70px;font-size:12.4px;font-weight:400;color:#107c41;line-height:16px;">A</span>
<span class="t" style="left:242.65px;top:169.70px;font-size:12.4px;font-weight:400;color:#242424;line-height:16px;">B</span>
<span class="t" style="left:351.45px;top:169.70px;font-size:12.4px;font-weight:400;color:#242424;line-height:16px;">C</span>
<span class="t" style="left:421.80px;top:169.70px;font-size:12.4px;font-weight:400;color:#242424;line-height:16px;">D</span>
<span class="t" style="left:716.10px;top:169.70px;font-size:12.4px;font-weight:400;color:#242424;line-height:16px;">E</span>
<span class="t" style="left:1068.45px;top:169.70px;font-size:12.4px;font-weight:400;color:#242424;line-height:16px;">F</span>
<span class="t" style="left:1247.30px;top:169.70px;font-size:12.4px;font-weight:400;color:#242424;line-height:16px;">G</span>
<span class="t" style="left:1383.00px;top:169.70px;font-size:12.4px;font-weight:400;color:#242424;line-height:16px;">H</span>
<span class="t" style="left:1476.75px;top:169.70px;font-size:12.4px;font-weight:400;color:#242424;line-height:16px;">I</span>
<span class="t" style="left:1551.80px;top:169.70px;font-size:12.4px;font-weight:400;color:#242424;line-height:16px;">J</span>
<span class="t" style="left:1645.40px;top:169.70px;font-size:12.4px;font-weight:400;color:#242424;line-height:16px;">K</span>
<span class="t" style="left:1741.75px;top:169.70px;font-size:12.4px;font-weight:400;color:#242424;line-height:16px;">L</span>
<span class="t" style="left:1804.30px;top:169.70px;font-size:12.4px;font-weight:400;color:#242424;line-height:16px;">M</span>
<span class="t" style="left:1869.00px;top:169.70px;font-size:12.4px;font-weight:400;color:#242424;line-height:16px;">N</span>
<span class="t" style="left:5.00px;top:193.60px;font-size:12.9px;font-weight:400;color:#107c41;line-height:17px;transform:scaleX(0.8800);">1</span>
<span class="t" style="left:5.13px;top:218.60px;font-size:12.9px;font-weight:400;color:#242424;line-height:17px;transform:scaleX(0.8800);">2</span>
<span class="t" style="left:5.18px;top:243.60px;font-size:12.9px;font-weight:400;color:#242424;line-height:17px;transform:scaleX(0.8800);">3</span>
<span class="t" style="left:5.22px;top:268.60px;font-size:12.9px;font-weight:400;color:#242424;line-height:17px;transform:scaleX(0.8800);">4</span>
<span class="t" style="left:5.13px;top:293.60px;font-size:12.9px;font-weight:400;color:#242424;line-height:17px;transform:scaleX(0.8800);">5</span>
<span class="t" style="left:5.09px;top:318.60px;font-size:12.9px;font-weight:400;color:#242424;line-height:17px;transform:scaleX(0.8800);">6</span>
<span class="t" style="left:5.13px;top:339.55px;font-size:12.9px;font-weight:400;color:#242424;line-height:17px;transform:scaleX(0.8800);">7</span>
<span class="t" style="left:5.13px;top:359.55px;font-size:12.9px;font-weight:400;color:#242424;line-height:17px;transform:scaleX(0.8800);">8</span>
<span class="t" style="left:5.13px;top:379.55px;font-size:12.9px;font-weight:400;color:#242424;line-height:17px;transform:scaleX(0.8800);">9</span>
<span class="t" style="left:2.50px;top:399.55px;font-size:12.9px;font-weight:400;color:#242424;line-height:17px;transform:scaleX(0.8800);">10</span>
<span class="t" style="left:2.96px;top:419.55px;font-size:12.9px;font-weight:400;color:#242424;line-height:17px;transform:scaleX(0.8800);">11</span>
<span class="t" style="left:2.55px;top:439.55px;font-size:12.9px;font-weight:400;color:#242424;line-height:17px;transform:scaleX(0.8800);">12</span>
<span class="t" style="left:2.50px;top:459.55px;font-size:12.9px;font-weight:400;color:#242424;line-height:17px;transform:scaleX(0.8800);">13</span>
<span class="t" style="left:2.46px;top:479.55px;font-size:12.9px;font-weight:400;color:#242424;line-height:17px;transform:scaleX(0.8800);">14</span>
<span class="t" style="left:2.50px;top:499.55px;font-size:12.9px;font-weight:400;color:#242424;line-height:17px;transform:scaleX(0.8800);">15</span>
<span class="t" style="left:2.50px;top:519.55px;font-size:12.9px;font-weight:400;color:#242424;line-height:17px;transform:scaleX(0.8800);">16</span>
<span class="t" style="left:2.55px;top:539.55px;font-size:12.9px;font-weight:400;color:#242424;line-height:17px;transform:scaleX(0.8800);">17</span>
<span class="t" style="left:2.50px;top:559.55px;font-size:12.9px;font-weight:400;color:#242424;line-height:17px;transform:scaleX(0.8800);">18</span>
<span class="t" style="left:2.55px;top:579.55px;font-size:12.9px;font-weight:400;color:#242424;line-height:17px;transform:scaleX(0.8800);">19</span>
<span class="t" style="left:2.63px;top:599.55px;font-size:12.9px;font-weight:400;color:#242424;line-height:17px;transform:scaleX(0.8800);">20</span>
<span class="t" style="left:2.68px;top:619.55px;font-size:12.9px;font-weight:400;color:#242424;line-height:17px;transform:scaleX(0.8800);">21</span>
<span class="t" style="left:2.68px;top:639.55px;font-size:12.9px;font-weight:400;color:#242424;line-height:17px;transform:scaleX(0.8800);">22</span>
<span class="t" style="left:2.63px;top:659.55px;font-size:12.9px;font-weight:400;color:#242424;line-height:17px;transform:scaleX(0.8800);">23</span>
<span class="t" style="left:2.59px;top:679.55px;font-size:12.9px;font-weight:400;color:#242424;line-height:17px;transform:scaleX(0.8800);">24</span>
<span class="t" style="left:2.63px;top:699.55px;font-size:12.9px;font-weight:400;color:#242424;line-height:17px;transform:scaleX(0.8800);">25</span>
<span class="t" style="left:2.63px;top:719.55px;font-size:12.9px;font-weight:400;color:#242424;line-height:17px;transform:scaleX(0.8800);">26</span>
<span class="t" style="left:2.68px;top:739.55px;font-size:12.9px;font-weight:400;color:#242424;line-height:17px;transform:scaleX(0.8800);">27</span>
<span class="t" style="left:2.63px;top:759.55px;font-size:12.9px;font-weight:400;color:#242424;line-height:17px;transform:scaleX(0.8800);">28</span>
<span class="t" style="left:2.68px;top:779.55px;font-size:12.9px;font-weight:400;color:#242424;line-height:17px;transform:scaleX(0.8800);">29</span>
<span class="t" style="left:2.72px;top:799.55px;font-size:12.9px;font-weight:400;color:#242424;line-height:17px;transform:scaleX(0.8800);">30</span>
<span class="t" style="left:2.77px;top:819.55px;font-size:12.9px;font-weight:400;color:#242424;line-height:17px;transform:scaleX(0.8800);">31</span>
<span class="t" style="left:2.77px;top:839.55px;font-size:12.9px;font-weight:400;color:#242424;line-height:17px;transform:scaleX(0.8800);">32</span>
<span class="t" style="left:2.72px;top:859.55px;font-size:12.9px;font-weight:400;color:#242424;line-height:17px;transform:scaleX(0.8800);">33</span>
<span class="t" style="left:2.68px;top:879.55px;font-size:12.9px;font-weight:400;color:#242424;line-height:17px;transform:scaleX(0.8800);">34</span>
<span class="t" style="left:2.72px;top:899.55px;font-size:12.9px;font-weight:400;color:#242424;line-height:17px;transform:scaleX(0.8800);">35</span>
<span class="t" style="left:2.72px;top:919.55px;font-size:12.9px;font-weight:400;color:#242424;line-height:17px;transform:scaleX(0.8800);">36</span>
<div style="left:20px;top:186px;width:157px;height:28px;border:2px solid #107c41;box-sizing:border-box"></div>
<div style="left:171px;top:208px;width:7px;height:7px;background:#107c41;border:1px solid #fff;box-sizing:border-box;border-right:0;border-bottom:0"></div>
</div>
<div style="left:0px;top:927px;width:1908px;height:33px;background:#fff"></div>
<div style="left:0px;top:927.2px;width:111.6px;height:32.8px;background:#e9e7ec;border-top-right-radius:4px"></div>
<div style="left:219.2px;top:927.2px;width:1689px;height:32.8px;background:#e9e7ec;border-top-left-radius:4px"></div>
<div style="left:100px;top:945px;width:130px;height:15px;background:#e9e7ec"></div>
<div style="left:0px;top:959px;width:1908px;height:1px;background:#cfcdd2"></div>
<div style="left:0px;top:960px;width:1908px;height:19px;background:#f3f3f3"></div>
<svg style="left:23px;top:937px;" width="9" height="12" viewBox="0 0 9 12" fill="none"><path d="M7.2 1.2L1.8 6l5.4 4.8" stroke="#a3a3a3" stroke-width="1.1"/></svg>
<svg style="left:56px;top:937px;" width="9" height="12" viewBox="0 0 9 12" fill="none"><path d="M1.8 1.2L7.2 6l-5.4 4.8" stroke="#a3a3a3" stroke-width="1.1"/></svg>
<div style="left:111.6px;top:927px;width:107.6px;height:28.4px;background:#fff;border-radius:0 0 5px 5px"></div>
<span class="t sb" style="left:119.87px;top:931.60px;font-size:13.7px;font-weight:400;color:#1a1a1a;line-height:18px;transform:scaleX(1.0569);">Quote_Output</span>
<div style="left:120px;top:949.9px;width:91px;height:2px;background:#107c41;border-radius:1px"></div>
<span class="t" style="left:236.39px;top:934.70px;font-size:13.7px;font-weight:400;color:#333;line-height:18px;transform:scaleX(1.0087);">Catalog_Quote</span>
<span class="t" style="left:355.66px;top:934.70px;font-size:13.7px;font-weight:400;color:#333;line-height:18px;transform:scaleX(0.9773);">Calc_Update</span>
<span class="t" style="left:460.15px;top:934.70px;font-size:13.7px;font-weight:400;color:#333;line-height:18px;transform:scaleX(0.9971);">PriceList_Import</span>
<span class="t" style="left:587.13px;top:934.70px;font-size:13.7px;font-weight:400;color:#333;line-height:18px;transform:scaleX(1.0194);">BundleItems_Import</span>
<span class="t" style="left:741.39px;top:934.70px;font-size:13.7px;font-weight:400;color:#333;line-height:18px;transform:scaleX(1.0077);">Bundles_Import</span>
<span class="t" style="left:865.15px;top:934.70px;font-size:13.7px;font-weight:400;color:#333;line-height:18px;transform:scaleX(1.0032);">Parts_Import</span>
<span class="t" style="left:971.38px;top:934.70px;font-size:13.7px;font-weight:400;color:#333;line-height:18px;transform:scaleX(1.0198);">BOM_Import</span>
<span class="t" style="left:1077.13px;top:934.70px;font-size:13.7px;font-weight:400;color:#333;line-height:18px;transform:scaleX(1.0195);">Products_Import</span>
<span class="t" style="left:1208.65px;top:934.70px;font-size:13.7px;font-weight:400;color:#333;line-height:18px;transform:scaleX(1.0069);">Customers_Import</span>
<span class="t" style="left:1350.20px;top:934.70px;font-size:13.7px;font-weight:400;color:#333;line-height:18px;transform:scaleX(0.9536);">Employees_Sales</span>
<span class="t" style="left:1481.43px;top:934.70px;font-size:13.7px;font-weight:400;color:#333;line-height:18px;transform:scaleX(0.9757);">Lists_Helper</span>
<div style="left:222.75px;top:935px;width:1px;height:16.5px;background:#cfcdd2"></div>
<div style="left:342.0px;top:935px;width:1px;height:16.5px;background:#cfcdd2"></div>
<div style="left:446.25px;top:935px;width:1px;height:16.5px;background:#cfcdd2"></div>
<div style="left:573.25px;top:935px;width:1px;height:16.5px;background:#cfcdd2"></div>
<div style="left:727.0px;top:935px;width:1px;height:16.5px;background:#cfcdd2"></div>
<div style="left:852.0px;top:935px;width:1px;height:16.5px;background:#cfcdd2"></div>
<div style="left:958.25px;top:935px;width:1px;height:16.5px;background:#cfcdd2"></div>
<div style="left:1063.75px;top:935px;width:1px;height:16.5px;background:#cfcdd2"></div>
<div style="left:1194.0px;top:935px;width:1px;height:16.5px;background:#cfcdd2"></div>
<div style="left:1336.25px;top:935px;width:1px;height:16.5px;background:#cfcdd2"></div>
<div style="left:1467.0px;top:935px;width:1px;height:16.5px;background:#cfcdd2"></div>
<div style="left:1568.25px;top:935px;width:1px;height:16.5px;background:#cfcdd2"></div>
<svg style="left:1610px;top:936px;" width="13" height="13" viewBox="0 0 13 13" fill="none"><path d="M6.6 1.2v10.6M1.3 6.5h10.6" stroke="#3b3b3b" stroke-width="1"/></svg>
<svg style="left:1777px;top:938px;" width="4" height="12" viewBox="0 0 4 12" fill="none"><circle cx="2" cy="1.9" r="0.95" fill="#222"/><circle cx="2" cy="5.9" r="0.95" fill="#222"/><circle cx="2" cy="9.9" r="0.95" fill="#222"/></svg>
<div style="left:1894px;top:168px;width:14px;height:762px;background:#e9e7ec"></div>
<div style="left:1897px;top:170px;width:14px;height:760px;background:#f3f3f3;border-radius:7px"></div>
<svg style="left:1899px;top:174px;" width="10" height="8" viewBox="0 0 10 8" fill="none"><path d="M1 7l4.5-5.5L10 7z" fill="#757575"/></svg>
<div style="left:1901.2px;top:185px;width:10px;height:717px;background:#757575;border-radius:5px"></div>
<svg style="left:1899px;top:917px;" width="10" height="9" viewBox="0 0 10 9" fill="none"><path d="M1.5 1.2h8L5.8 7.6z" fill="#757575"/></svg>
<div style="left:1795px;top:933.8px;width:102px;height:17.2px;background:#f3f3f3;border-radius:8.6px"></div>
<svg style="left:1799px;top:937px;" width="9" height="11" viewBox="0 0 9 11" fill="none"><path d="M8 1v9L1 5.5z" fill="#757575"/></svg>
<div style="left:1812px;top:938.2px;width:65px;height:8.8px;background:#757575;border-radius:4.4px"></div>
<svg style="left:1883.6px;top:937px;" width="9" height="11" viewBox="0 0 9 11" fill="none"><path d="M1 1v9l7-4.5z" fill="#757575"/></svg>
<span class="t" style="left:7.39px;top:963.00px;font-size:11.4px;font-weight:400;color:#3a3a3a;line-height:15px;transform:scaleX(0.9520);">Ready</span>
<svg style="left:57px;top:963px;" width="17" height="15" viewBox="0 0 17 15" fill="none"><path d="M1.5 1.8h14v4M1.5 1.8v11h7M1.5 4.6h14M3.6 7.4h3.2M3.6 10h2.4" stroke="#333" stroke-width="1.1"/><circle cx="11.2" cy="10" r="3.7" stroke="#333" stroke-width="1.1"/><circle cx="11.2" cy="10" r="1.5" fill="#333"/></svg>
<svg style="left:89px;top:962px;" width="17" height="16" viewBox="0 0 17 16" fill="none"><circle cx="7.2" cy="2.6" r="1.6" stroke="#333" stroke-width="1"/><path d="M1.6 5.6c3.6 1.2 7.6 1.2 11.2 0M5.2 6.6l-.2 4-2.4 4.6M9.2 6.6l.2 3" stroke="#333" stroke-width="1.1" stroke-linecap="round"/><path d="M8.6 10.4l5.6 5.2M14.2 10.4l-5.6 5.2" stroke="#333" stroke-width="1.1"/></svg>
<span class="t sb" style="left:108.25px;top:963.10px;font-size:11.4px;font-weight:400;color:#2a2a2a;line-height:15px;transform:scaleX(1.0202);">Accessibility: Investigate</span>
<div style="left:1616px;top:960px;width:40px;height:19px;background:#dcdcdc"></div>
<svg style="left:1628px;top:962px;" width="16" height="15" viewBox="0 0 16 15" fill="none"><path d="M1.5 1.5h12.6v12.6H1.5zM1.5 5.7h12.6M1.5 9.9h12.6M5.7 1.5v12.6M9.9 1.5v12.6" stroke="#222" stroke-width="1.2"/></svg>
<svg style="left:1668px;top:962px;" width="16" height="15" viewBox="0 0 16 15" fill="none"><path d="M1.5 1.5h12.8v12.6H1.5z" stroke="#222" stroke-width="1.2"/><path d="M4.2 4.2h7.4v7.2H4.2zM5.8 6.4h4.2M5.8 7.9h4.2M5.8 9.4h4.2" stroke="#222" stroke-width="0.9"/></svg>
<svg style="left:1708px;top:962px;" width="16" height="15" viewBox="0 0 16 15" fill="none"><path d="M1.6 1.6h12.8v12.4H1.6zM1.6 7.6h8.2V1.6M5.7 1.6v6" stroke="#222" stroke-width="1.2"/></svg>
<div style="left:1742px;top:969.3px;width:7.6px;height:1.1px;background:#333"></div>
<div style="left:1755px;top:969.5px;width:100px;height:1px;background:#8a8a8a"></div>
<div style="left:1803.2px;top:965.2px;width:4.6px;height:10.6px;background:#666"></div>
<svg style="left:1859px;top:965px;" width="10" height="10" viewBox="0 0 10 10" fill="none"><path d="M5 1v8M1 5h8" stroke="#333" stroke-width="1.1"/></svg>
<span class="t" style="left:1881.17px;top:963.00px;font-size:11.4px;font-weight:400;color:#333;line-height:15px;transform:scaleX(1.0356);">100%</span>
</div></body></html>
